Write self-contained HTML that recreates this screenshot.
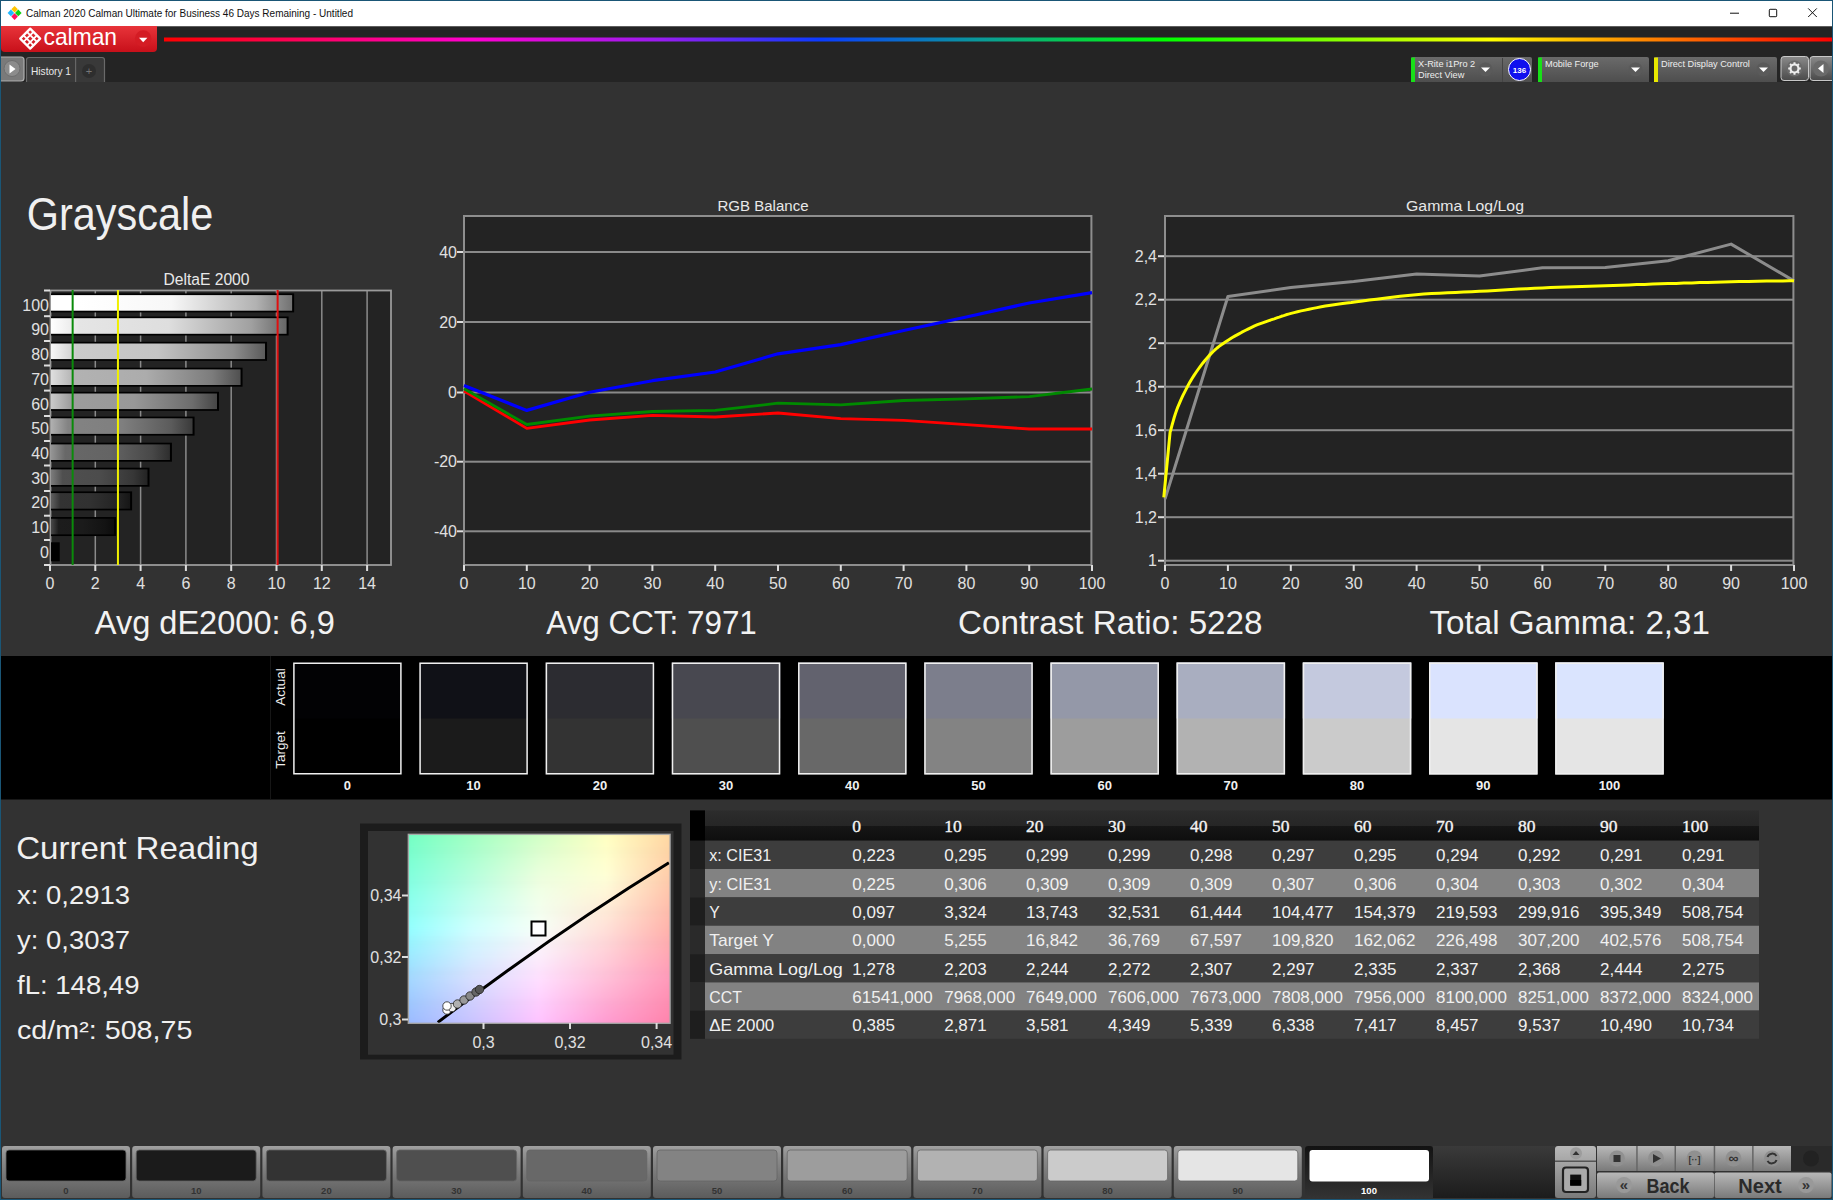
<!DOCTYPE html>
<html><head><meta charset="utf-8"><title>Calman Grayscale</title>
<style>html,body{margin:0;padding:0;background:#333;width:1833px;height:1200px;overflow:hidden}svg{display:block}</style>
</head><body>
<svg width="1833" height="1200" viewBox="0 0 1833 1200">
<defs>
<linearGradient id="rainbow" x1="164" x2="1832" y1="0" y2="0" gradientUnits="userSpaceOnUse">
<stop offset="0" stop-color="#ff0000"/>
<stop offset="0.186" stop-color="#ff00d0"/>
<stop offset="0.297" stop-color="#9a1cf0"/>
<stop offset="0.394" stop-color="#0a3cff"/>
<stop offset="0.489" stop-color="#0a9a9a"/>
<stop offset="0.600" stop-color="#00ff00"/>
<stop offset="0.796" stop-color="#ffff00"/>
<stop offset="0.880" stop-color="#ff9000"/>
<stop offset="1" stop-color="#ff0000"/>
</linearGradient>
<linearGradient id="redbtn" x1="0" x2="0" y1="0" y2="1">
<stop offset="0" stop-color="#e8343a"/><stop offset="1" stop-color="#c8101a"/>
</linearGradient>
<linearGradient id="greybtn" x1="0" x2="0" y1="0" y2="1">
<stop offset="0" stop-color="#8a8a8a"/><stop offset="1" stop-color="#4a4a4a"/>
</linearGradient>
<linearGradient id="selbox" x1="0" x2="0" y1="0" y2="1">
<stop offset="0" stop-color="#6a6a6a"/><stop offset="1" stop-color="#4e4e4e"/>
</linearGradient>
<linearGradient id="tbhead" x1="0" x2="0" y1="0" y2="1">
<stop offset="0" stop-color="#2c2c2c"/><stop offset="0.5" stop-color="#262626"/><stop offset="0.52" stop-color="#161616"/><stop offset="1" stop-color="#0e0e0e"/>
</linearGradient>
<linearGradient id="tbbtn" x1="0" x2="0" y1="0" y2="1">
<stop offset="0" stop-color="#a0a0a0"/><stop offset="0.25" stop-color="#8a8a8a"/><stop offset="1" stop-color="#5c5c5c"/>
</linearGradient>
<linearGradient id="ctrlbtn" x1="0" x2="0" y1="0" y2="1">
<stop offset="0" stop-color="#b8b8b8"/><stop offset="1" stop-color="#7a7a7a"/>
</linearGradient>
</defs>
<rect x="0" y="0" width="1833" height="1200" fill="#323232"/>
<rect x="0" y="0" width="1833" height="26.5" fill="#ffffff"/>
<rect x="0" y="26.5" width="1833" height="55.5" fill="#242424"/>
<g transform="translate(14.6,12.9)"><path d="M0 -7 L3.3 -3.7 L0 -0.4 L-3.3 -3.7 Z" fill="#ffc400"/><path d="M0 0.4 L3.3 3.7 L0 7 L-3.3 3.7 Z" fill="#ff1060"/><path d="M-7 0 L-3.7 -3.3 L-0.4 0 L-3.7 3.3 Z" fill="#20b8ff"/><path d="M0.4 0 L3.7 -3.3 L7 0 L3.7 3.3 Z" fill="#10d010"/></g>
<text x="26" y="17.2" font-family="Liberation Sans" font-size="11.5" text-anchor="start" fill="#111" font-weight="normal" textLength="327" lengthAdjust="spacingAndGlyphs" >Calman 2020 Calman Ultimate for Business 46 Days Remaining - Untitled</text>
<rect x="1730" y="12.7" width="9" height="1" fill="#111"/>
<rect x="1769.3" y="9.3" width="7.4" height="7.4" rx="0.8" fill="none" stroke="#111" stroke-width="1"/>
<path d="M1808.2 8.4 L1816.8 17 M1816.8 8.4 L1808.2 17" stroke="#111" stroke-width="1"/>
<path d="M1 26 H157 V48 Q157 52 153 52 H5 Q1 52 1 48 Z" fill="url(#redbtn)"/>
<g transform="translate(30.2,38.6)"><path d="M0 -10 L10 0 L0 10 L-10 0 Z" fill="none" stroke="#fff" stroke-width="2.2" stroke-linejoin="round"/><path d="M-3.3 -6.7 L6.7 3.3 M3.3 -6.7 L-6.7 3.3 M-6.7 -3.3 L3.3 6.7 M6.7 -3.3 L-3.3 6.7" stroke="#fff" stroke-width="1.8"/></g>
<text x="43.5" y="44.7" font-family="Liberation Sans" font-size="24" text-anchor="start" fill="#ffffff" font-weight="normal" textLength="73.5" lengthAdjust="spacingAndGlyphs" >calman</text>
<circle cx="143.2" cy="38.6" r="8.3" fill="#d41c24"/>
<path d="M139 37.8 L147.4 37.8 L143.2 42.3 Z" fill="#fff"/>
<rect x="164" y="37.5" width="1668" height="4" fill="url(#rainbow)"/>
<path d="M0 57 H21 Q24 57 24 60 V78 Q24 81 21 81 H0 Z" fill="#7a7a7a" stroke="#b0b0b0" stroke-width="1.2"/>
<circle cx="12" cy="68.5" r="8" fill="#8c8c8c" stroke="#6e6e6e" stroke-width="1"/>
<path d="M9.5 64.5 L15.5 69 L9.5 73.5 Z" fill="#fff"/>
<path d="M26.5 82 V60 Q26.5 57.5 29 57.5 H102 Q104.5 57.5 104.5 60 V82" fill="#393939" stroke="#6a6a6a" stroke-width="1.2"/>
<rect x="75" y="58" width="1.2" height="24" fill="#666"/>
<text x="31" y="74.5" font-family="Liberation Sans" font-size="10.5" text-anchor="start" fill="#e8e8e8" font-weight="normal" textLength="40" lengthAdjust="spacingAndGlyphs" >History 1</text>
<circle cx="89" cy="71" r="7" fill="#2e2e2e"/>
<text x="89" y="75" font-family="Liberation Sans" font-size="11" text-anchor="middle" fill="#777" font-weight="normal" >+</text>
<path d="M1411 82 V59 Q1411 57 1413 57 H1530 Q1532 57 1532 59 V82 Z" fill="url(#selbox)"/>
<rect x="1411" y="57.5" width="4" height="24.5" fill="#18e018"/>
<text x="1418" y="66.5" font-family="Liberation Sans" font-size="9.2" text-anchor="start" fill="#eeeeee" font-weight="normal" >X-Rite i1Pro 2</text>
<text x="1418" y="78.0" font-family="Liberation Sans" font-size="9.2" text-anchor="start" fill="#eeeeee" font-weight="normal" >Direct View</text>
<circle cx="1485.5" cy="69.5" r="7" fill="#5a5a5a"/>
<path d="M1481.0 67.5 L1490.0 67.5 L1485.5 72 Z" fill="#fff"/>
<rect x="1502" y="58" width="1" height="24" fill="#444"/>
<circle cx="1519.5" cy="69.5" r="11" fill="#1010ee" stroke="#ffffff" stroke-width="1"/>
<text x="1519.5" y="72.5" font-family="Liberation Sans" font-size="8" text-anchor="middle" fill="#fff" font-weight="bold" >136</text>
<path d="M1538 82 V59 Q1538 57 1540 57 H1647 Q1649 57 1649 59 V82 Z" fill="url(#selbox)"/>
<rect x="1538" y="57.5" width="4" height="24.5" fill="#18e018"/>
<text x="1545" y="66.5" font-family="Liberation Sans" font-size="9.2" text-anchor="start" fill="#eeeeee" font-weight="normal" >Mobile Forge</text>
<circle cx="1635.5" cy="69.5" r="7" fill="#5a5a5a"/>
<path d="M1631.0 67.5 L1640.0 67.5 L1635.5 72 Z" fill="#fff"/>
<path d="M1654 82 V59 Q1654 57 1656 57 H1775 Q1777 57 1777 59 V82 Z" fill="url(#selbox)"/>
<rect x="1654" y="57.5" width="4" height="24.5" fill="#e8e800"/>
<text x="1661" y="66.5" font-family="Liberation Sans" font-size="9.2" text-anchor="start" fill="#eeeeee" font-weight="normal" >Direct Display Control</text>
<circle cx="1763.5" cy="69.5" r="7" fill="#5a5a5a"/>
<path d="M1759.0 67.5 L1768.0 67.5 L1763.5 72 Z" fill="#fff"/>
<rect x="1781" y="56.5" width="27.5" height="24" rx="3" fill="url(#greybtn)" stroke="#c8c8c8" stroke-width="1"/>
<circle cx="1794.5" cy="68.5" r="8" fill="#6a6a6a"/>
<circle cx="1794.5" cy="68.5" r="4" fill="none" stroke="#eee" stroke-width="2.2"/>
<path d="M1799.00 68.50 L1800.80 68.50 M1797.68 71.68 L1798.95 72.95 M1794.50 73.00 L1794.50 74.80 M1791.32 71.68 L1790.05 72.95 M1790.00 68.50 L1788.20 68.50 M1791.32 65.32 L1790.05 64.05 M1794.50 64.00 L1794.50 62.20 M1797.68 65.32 L1798.95 64.05" stroke="#eee" stroke-width="2"/>
<rect x="1810" y="56.5" width="26" height="24" rx="3" fill="url(#greybtn)" stroke="#c8c8c8" stroke-width="1"/>
<circle cx="1821" cy="68.5" r="8" fill="#6a6a6a"/>
<path d="M1823.5 64 L1818 68.5 L1823.5 73 Z" fill="#fff"/>
<text x="26.8" y="230" font-family="Liberation Sans" font-size="46" text-anchor="start" fill="#f0f0f0" font-weight="normal" textLength="186.5" lengthAdjust="spacingAndGlyphs" >Grayscale</text>
<text x="206.5" y="284.9" font-family="Liberation Sans" font-size="16" text-anchor="middle" fill="#e8e8e8" font-weight="normal" textLength="86" lengthAdjust="spacingAndGlyphs" >DeltaE 2000</text>
<rect x="50" y="290" width="341" height="275" fill="#232323"/>
<rect x="94.55" y="290" width="1.5" height="275" fill="#8a8a8a"/>
<rect x="139.85" y="290" width="1.5" height="275" fill="#8a8a8a"/>
<rect x="185.15" y="290" width="1.5" height="275" fill="#8a8a8a"/>
<rect x="230.45" y="290" width="1.5" height="275" fill="#8a8a8a"/>
<rect x="275.75" y="290" width="1.5" height="275" fill="#8a8a8a"/>
<rect x="321.05" y="290" width="1.5" height="275" fill="#8a8a8a"/>
<rect x="366.35" y="290" width="1.5" height="275" fill="#8a8a8a"/>
<rect x="50.5" y="290.5" width="340.5" height="274.5" fill="none" stroke="#9a9a9a" stroke-width="1.8"/>
<rect x="51" y="542.30" width="8.72" height="19" fill="#000"/>
<rect x="51" y="544.00" width="6.72" height="15.6" fill="url(#bar0)"/>
<rect x="51" y="517.05" width="65.03" height="19" fill="#000"/>
<rect x="51" y="518.75" width="63.03" height="15.6" fill="url(#bar1)"/>
<rect x="51" y="491.40" width="81.11" height="19" fill="#000"/>
<rect x="51" y="493.10" width="79.11" height="15.6" fill="url(#bar2)"/>
<rect x="51" y="467.70" width="98.50" height="19" fill="#000"/>
<rect x="51" y="469.40" width="96.50" height="15.6" fill="url(#bar3)"/>
<rect x="51" y="442.70" width="120.93" height="19" fill="#000"/>
<rect x="51" y="444.40" width="118.93" height="15.6" fill="url(#bar4)"/>
<rect x="51" y="416.60" width="143.56" height="19" fill="#000"/>
<rect x="51" y="418.30" width="141.56" height="15.6" fill="url(#bar5)"/>
<rect x="51" y="391.80" width="168.00" height="19" fill="#000"/>
<rect x="51" y="393.50" width="166.00" height="15.6" fill="url(#bar6)"/>
<rect x="51" y="367.70" width="191.55" height="19" fill="#000"/>
<rect x="51" y="369.40" width="189.55" height="15.6" fill="url(#bar7)"/>
<rect x="51" y="341.80" width="216.01" height="19" fill="#000"/>
<rect x="51" y="343.50" width="214.01" height="15.6" fill="url(#bar8)"/>
<rect x="51" y="316.50" width="237.60" height="19" fill="#000"/>
<rect x="51" y="318.20" width="235.60" height="15.6" fill="url(#bar9)"/>
<rect x="51" y="293.40" width="243.13" height="19" fill="#000"/>
<rect x="51" y="295.10" width="241.13" height="15.6" fill="url(#bar10)"/>
<defs><linearGradient id="bar0" x1="0" x2="1" y1="0" y2="0"><stop offset="0" stop-color="rgb(10,10,10)"/><stop offset="0.12" stop-color="rgb(0,0,0)"/><stop offset="0.5" stop-color="rgb(0,0,0)"/><stop offset="0.85" stop-color="rgb(0,0,0)"/><stop offset="1" stop-color="rgb(0,0,0)"/></linearGradient><linearGradient id="bar1" x1="0" x2="1" y1="0" y2="0"><stop offset="0" stop-color="rgb(73,73,73)"/><stop offset="0.12" stop-color="rgb(28,28,28)"/><stop offset="0.5" stop-color="rgb(27,27,27)"/><stop offset="0.85" stop-color="rgb(19,19,19)"/><stop offset="1" stop-color="rgb(12,12,12)"/></linearGradient><linearGradient id="bar2" x1="0" x2="1" y1="0" y2="0"><stop offset="0" stop-color="rgb(96,96,96)"/><stop offset="0.12" stop-color="rgb(51,51,51)"/><stop offset="0.5" stop-color="rgb(49,49,49)"/><stop offset="0.85" stop-color="rgb(35,35,35)"/><stop offset="1" stop-color="rgb(22,22,22)"/></linearGradient><linearGradient id="bar3" x1="0" x2="1" y1="0" y2="0"><stop offset="0" stop-color="rgb(124,124,124)"/><stop offset="0.12" stop-color="rgb(79,79,79)"/><stop offset="0.5" stop-color="rgb(76,76,76)"/><stop offset="0.85" stop-color="rgb(55,55,55)"/><stop offset="1" stop-color="rgb(35,35,35)"/></linearGradient><linearGradient id="bar4" x1="0" x2="1" y1="0" y2="0"><stop offset="0" stop-color="rgb(149,149,149)"/><stop offset="0.12" stop-color="rgb(104,104,104)"/><stop offset="0.5" stop-color="rgb(100,100,100)"/><stop offset="0.85" stop-color="rgb(72,72,72)"/><stop offset="1" stop-color="rgb(46,46,46)"/></linearGradient><linearGradient id="bar5" x1="0" x2="1" y1="0" y2="0"><stop offset="0" stop-color="rgb(176,176,176)"/><stop offset="0.12" stop-color="rgb(131,131,131)"/><stop offset="0.5" stop-color="rgb(127,127,127)"/><stop offset="0.85" stop-color="rgb(91,91,91)"/><stop offset="1" stop-color="rgb(58,58,58)"/></linearGradient><linearGradient id="bar6" x1="0" x2="1" y1="0" y2="0"><stop offset="0" stop-color="rgb(202,202,202)"/><stop offset="0.12" stop-color="rgb(157,157,157)"/><stop offset="0.5" stop-color="rgb(152,152,152)"/><stop offset="0.85" stop-color="rgb(109,109,109)"/><stop offset="1" stop-color="rgb(70,70,70)"/></linearGradient><linearGradient id="bar7" x1="0" x2="1" y1="0" y2="0"><stop offset="0" stop-color="rgb(223,223,223)"/><stop offset="0.12" stop-color="rgb(178,178,178)"/><stop offset="0.5" stop-color="rgb(172,172,172)"/><stop offset="0.85" stop-color="rgb(124,124,124)"/><stop offset="1" stop-color="rgb(80,80,80)"/></linearGradient><linearGradient id="bar8" x1="0" x2="1" y1="0" y2="0"><stop offset="0" stop-color="rgb(248,248,248)"/><stop offset="0.12" stop-color="rgb(203,203,203)"/><stop offset="0.5" stop-color="rgb(196,196,196)"/><stop offset="0.85" stop-color="rgb(142,142,142)"/><stop offset="1" stop-color="rgb(91,91,91)"/></linearGradient><linearGradient id="bar9" x1="0" x2="1" y1="0" y2="0"><stop offset="0" stop-color="rgb(255,255,255)"/><stop offset="0.12" stop-color="rgb(229,229,229)"/><stop offset="0.5" stop-color="rgb(222,222,222)"/><stop offset="0.85" stop-color="rgb(160,160,160)"/><stop offset="1" stop-color="rgb(103,103,103)"/></linearGradient><linearGradient id="bar10" x1="0" x2="1" y1="0" y2="0"><stop offset="0" stop-color="rgb(255,255,255)"/><stop offset="0.12" stop-color="rgb(255,255,255)"/><stop offset="0.5" stop-color="rgb(247,247,247)"/><stop offset="0.85" stop-color="rgb(178,178,178)"/><stop offset="1" stop-color="rgb(114,114,114)"/></linearGradient></defs>
<rect x="71.65" y="290" width="2" height="275" fill="#0a8a0a"/>
<rect x="116.95" y="290" width="2" height="275" fill="#f0f000"/>
<rect x="276.63" y="290" width="2" height="275" fill="#e01010"/>
<rect x="44" y="564.00" width="6" height="2" fill="#dddddd"/>
<rect x="44" y="539.00" width="6" height="2" fill="#dddddd"/>
<rect x="44" y="514.70" width="6" height="2" fill="#dddddd"/>
<rect x="44" y="490.00" width="6" height="2" fill="#dddddd"/>
<rect x="44" y="464.50" width="6" height="2" fill="#dddddd"/>
<rect x="44" y="440.00" width="6" height="2" fill="#dddddd"/>
<rect x="44" y="415.00" width="6" height="2" fill="#dddddd"/>
<rect x="44" y="389.60" width="6" height="2" fill="#dddddd"/>
<rect x="44" y="364.50" width="6" height="2" fill="#dddddd"/>
<rect x="44" y="340.00" width="6" height="2" fill="#dddddd"/>
<rect x="44" y="315.20" width="6" height="2" fill="#dddddd"/>
<rect x="44" y="289.50" width="6" height="2" fill="#dddddd"/>
<text x="49" y="558.3" font-family="Liberation Sans" font-size="16" text-anchor="end" fill="#e0e0e0" font-weight="normal" >0</text>
<text x="49" y="533.4" font-family="Liberation Sans" font-size="16" text-anchor="end" fill="#e0e0e0" font-weight="normal" >10</text>
<text x="49" y="508.4" font-family="Liberation Sans" font-size="16" text-anchor="end" fill="#e0e0e0" font-weight="normal" >20</text>
<text x="49" y="484.3" font-family="Liberation Sans" font-size="16" text-anchor="end" fill="#e0e0e0" font-weight="normal" >30</text>
<text x="49" y="458.8" font-family="Liberation Sans" font-size="16" text-anchor="end" fill="#e0e0e0" font-weight="normal" >40</text>
<text x="49" y="434" font-family="Liberation Sans" font-size="16" text-anchor="end" fill="#e0e0e0" font-weight="normal" >50</text>
<text x="49" y="409.5" font-family="Liberation Sans" font-size="16" text-anchor="end" fill="#e0e0e0" font-weight="normal" >60</text>
<text x="49" y="384.5" font-family="Liberation Sans" font-size="16" text-anchor="end" fill="#e0e0e0" font-weight="normal" >70</text>
<text x="49" y="359.5" font-family="Liberation Sans" font-size="16" text-anchor="end" fill="#e0e0e0" font-weight="normal" >80</text>
<text x="49" y="335" font-family="Liberation Sans" font-size="16" text-anchor="end" fill="#e0e0e0" font-weight="normal" >90</text>
<text x="49" y="310.5" font-family="Liberation Sans" font-size="16" text-anchor="end" fill="#e0e0e0" font-weight="normal" >100</text>
<rect x="49.00" y="565" width="2" height="6" fill="#dddddd"/>
<text x="50.0" y="589" font-family="Liberation Sans" font-size="16" text-anchor="middle" fill="#e0e0e0" font-weight="normal" >0</text>
<rect x="94.30" y="565" width="2" height="6" fill="#dddddd"/>
<text x="95.3" y="589" font-family="Liberation Sans" font-size="16" text-anchor="middle" fill="#e0e0e0" font-weight="normal" >2</text>
<rect x="139.60" y="565" width="2" height="6" fill="#dddddd"/>
<text x="140.6" y="589" font-family="Liberation Sans" font-size="16" text-anchor="middle" fill="#e0e0e0" font-weight="normal" >4</text>
<rect x="184.90" y="565" width="2" height="6" fill="#dddddd"/>
<text x="185.9" y="589" font-family="Liberation Sans" font-size="16" text-anchor="middle" fill="#e0e0e0" font-weight="normal" >6</text>
<rect x="230.20" y="565" width="2" height="6" fill="#dddddd"/>
<text x="231.2" y="589" font-family="Liberation Sans" font-size="16" text-anchor="middle" fill="#e0e0e0" font-weight="normal" >8</text>
<rect x="275.50" y="565" width="2" height="6" fill="#dddddd"/>
<text x="276.5" y="589" font-family="Liberation Sans" font-size="16" text-anchor="middle" fill="#e0e0e0" font-weight="normal" >10</text>
<rect x="320.80" y="565" width="2" height="6" fill="#dddddd"/>
<text x="321.8" y="589" font-family="Liberation Sans" font-size="16" text-anchor="middle" fill="#e0e0e0" font-weight="normal" >12</text>
<rect x="366.10" y="565" width="2" height="6" fill="#dddddd"/>
<text x="367.1" y="589" font-family="Liberation Sans" font-size="16" text-anchor="middle" fill="#e0e0e0" font-weight="normal" >14</text>
<text x="763" y="211" font-family="Liberation Sans" font-size="15.5" text-anchor="middle" fill="#e8e8e8" font-weight="normal" textLength="91" lengthAdjust="spacingAndGlyphs" >RGB Balance</text>
<rect x="464" y="216" width="628" height="349" fill="#232323"/>
<rect x="464" y="251.00" width="628" height="2" fill="#8a8a8a"/>
<rect x="457" y="251.00" width="7" height="2" fill="#dddddd"/>
<text x="457" y="257.5" font-family="Liberation Sans" font-size="16" text-anchor="end" fill="#e0e0e0" font-weight="normal" >40</text>
<rect x="464" y="321.00" width="628" height="2" fill="#8a8a8a"/>
<rect x="457" y="321.00" width="7" height="2" fill="#dddddd"/>
<text x="457" y="327.5" font-family="Liberation Sans" font-size="16" text-anchor="end" fill="#e0e0e0" font-weight="normal" >20</text>
<rect x="464" y="391.50" width="628" height="2" fill="#8a8a8a"/>
<rect x="457" y="391.50" width="7" height="2" fill="#dddddd"/>
<text x="457" y="398.0" font-family="Liberation Sans" font-size="16" text-anchor="end" fill="#e0e0e0" font-weight="normal" >0</text>
<rect x="464" y="460.70" width="628" height="2" fill="#8a8a8a"/>
<rect x="457" y="460.70" width="7" height="2" fill="#dddddd"/>
<text x="457" y="467.2" font-family="Liberation Sans" font-size="16" text-anchor="end" fill="#e0e0e0" font-weight="normal" >-20</text>
<rect x="464" y="530.30" width="628" height="2" fill="#8a8a8a"/>
<rect x="457" y="530.30" width="7" height="2" fill="#dddddd"/>
<text x="457" y="536.8" font-family="Liberation Sans" font-size="16" text-anchor="end" fill="#e0e0e0" font-weight="normal" >-40</text>
<rect x="464" y="216" width="627.4" height="349" fill="none" stroke="#8e8e8e" stroke-width="2"/>
<rect x="463.00" y="565" width="2" height="6" fill="#dddddd"/>
<text x="464.0" y="589" font-family="Liberation Sans" font-size="16" text-anchor="middle" fill="#e0e0e0" font-weight="normal" >0</text>
<rect x="525.80" y="565" width="2" height="6" fill="#dddddd"/>
<text x="526.8" y="589" font-family="Liberation Sans" font-size="16" text-anchor="middle" fill="#e0e0e0" font-weight="normal" >10</text>
<rect x="588.60" y="565" width="2" height="6" fill="#dddddd"/>
<text x="589.6" y="589" font-family="Liberation Sans" font-size="16" text-anchor="middle" fill="#e0e0e0" font-weight="normal" >20</text>
<rect x="651.40" y="565" width="2" height="6" fill="#dddddd"/>
<text x="652.4" y="589" font-family="Liberation Sans" font-size="16" text-anchor="middle" fill="#e0e0e0" font-weight="normal" >30</text>
<rect x="714.20" y="565" width="2" height="6" fill="#dddddd"/>
<text x="715.2" y="589" font-family="Liberation Sans" font-size="16" text-anchor="middle" fill="#e0e0e0" font-weight="normal" >40</text>
<rect x="777.00" y="565" width="2" height="6" fill="#dddddd"/>
<text x="778.0" y="589" font-family="Liberation Sans" font-size="16" text-anchor="middle" fill="#e0e0e0" font-weight="normal" >50</text>
<rect x="839.80" y="565" width="2" height="6" fill="#dddddd"/>
<text x="840.8" y="589" font-family="Liberation Sans" font-size="16" text-anchor="middle" fill="#e0e0e0" font-weight="normal" >60</text>
<rect x="902.60" y="565" width="2" height="6" fill="#dddddd"/>
<text x="903.6" y="589" font-family="Liberation Sans" font-size="16" text-anchor="middle" fill="#e0e0e0" font-weight="normal" >70</text>
<rect x="965.40" y="565" width="2" height="6" fill="#dddddd"/>
<text x="966.4" y="589" font-family="Liberation Sans" font-size="16" text-anchor="middle" fill="#e0e0e0" font-weight="normal" >80</text>
<rect x="1028.20" y="565" width="2" height="6" fill="#dddddd"/>
<text x="1029.2" y="589" font-family="Liberation Sans" font-size="16" text-anchor="middle" fill="#e0e0e0" font-weight="normal" >90</text>
<rect x="1091.00" y="565" width="2" height="6" fill="#dddddd"/>
<text x="1092.0" y="589" font-family="Liberation Sans" font-size="16" text-anchor="middle" fill="#e0e0e0" font-weight="normal" >100</text>
<polyline points="464.0,391 526.8,428.4 589.6,420 652.4,415.4 715.2,417 778.0,413 840.8,418.7 903.6,420.4 966.4,424.7 1029.2,429 1092.0,429" fill="none" stroke="#ff0000" stroke-width="2.8" stroke-linejoin="round"/>
<polyline points="464.0,388.7 526.8,424.5 589.6,416.2 652.4,411.5 715.2,410.4 778.0,403.2 840.8,404.8 903.6,400.5 966.4,398.8 1029.2,396.6 1092.0,389" fill="none" stroke="#008a00" stroke-width="2.8" stroke-linejoin="round"/>
<polyline points="464.0,385.5 526.8,410.4 589.6,392.3 652.4,380.7 715.2,372 778.0,353.8 840.8,344.6 903.6,330.5 966.4,317 1029.2,303 1092.0,292.6" fill="none" stroke="#0000ff" stroke-width="3.2" stroke-linejoin="round"/>
<text x="1465" y="211" font-family="Liberation Sans" font-size="15.5" text-anchor="middle" fill="#e8e8e8" font-weight="normal" textLength="118" lengthAdjust="spacingAndGlyphs" >Gamma Log/Log</text>
<rect x="1165" y="216" width="629" height="349" fill="#232323"/>
<rect x="1165" y="255.20" width="629" height="2" fill="#8a8a8a"/>
<rect x="1158" y="255.20" width="7" height="2" fill="#dddddd"/>
<text x="1157" y="261.7" font-family="Liberation Sans" font-size="16" text-anchor="end" fill="#e0e0e0" font-weight="normal" >2,4</text>
<rect x="1165" y="298.70" width="629" height="2" fill="#8a8a8a"/>
<rect x="1158" y="298.70" width="7" height="2" fill="#dddddd"/>
<text x="1157" y="305.2" font-family="Liberation Sans" font-size="16" text-anchor="end" fill="#e0e0e0" font-weight="normal" >2,2</text>
<rect x="1165" y="342.20" width="629" height="2" fill="#8a8a8a"/>
<rect x="1158" y="342.20" width="7" height="2" fill="#dddddd"/>
<text x="1157" y="348.7" font-family="Liberation Sans" font-size="16" text-anchor="end" fill="#e0e0e0" font-weight="normal" >2</text>
<rect x="1165" y="385.70" width="629" height="2" fill="#8a8a8a"/>
<rect x="1158" y="385.70" width="7" height="2" fill="#dddddd"/>
<text x="1157" y="392.2" font-family="Liberation Sans" font-size="16" text-anchor="end" fill="#e0e0e0" font-weight="normal" >1,8</text>
<rect x="1165" y="429.20" width="629" height="2" fill="#8a8a8a"/>
<rect x="1158" y="429.20" width="7" height="2" fill="#dddddd"/>
<text x="1157" y="435.7" font-family="Liberation Sans" font-size="16" text-anchor="end" fill="#e0e0e0" font-weight="normal" >1,6</text>
<rect x="1165" y="472.70" width="629" height="2" fill="#8a8a8a"/>
<rect x="1158" y="472.70" width="7" height="2" fill="#dddddd"/>
<text x="1157" y="479.2" font-family="Liberation Sans" font-size="16" text-anchor="end" fill="#e0e0e0" font-weight="normal" >1,4</text>
<rect x="1165" y="516.20" width="629" height="2" fill="#8a8a8a"/>
<rect x="1158" y="516.20" width="7" height="2" fill="#dddddd"/>
<text x="1157" y="522.7" font-family="Liberation Sans" font-size="16" text-anchor="end" fill="#e0e0e0" font-weight="normal" >1,2</text>
<rect x="1165" y="559.70" width="629" height="2" fill="#8a8a8a"/>
<rect x="1158" y="559.70" width="7" height="2" fill="#dddddd"/>
<text x="1157" y="566.2" font-family="Liberation Sans" font-size="16" text-anchor="end" fill="#e0e0e0" font-weight="normal" >1</text>
<rect x="1165" y="216" width="628.4" height="349" fill="none" stroke="#8e8e8e" stroke-width="2"/>
<rect x="1164.00" y="565" width="2" height="6" fill="#dddddd"/>
<text x="1165.0" y="589" font-family="Liberation Sans" font-size="16" text-anchor="middle" fill="#e0e0e0" font-weight="normal" >0</text>
<rect x="1226.90" y="565" width="2" height="6" fill="#dddddd"/>
<text x="1227.9" y="589" font-family="Liberation Sans" font-size="16" text-anchor="middle" fill="#e0e0e0" font-weight="normal" >10</text>
<rect x="1289.80" y="565" width="2" height="6" fill="#dddddd"/>
<text x="1290.8" y="589" font-family="Liberation Sans" font-size="16" text-anchor="middle" fill="#e0e0e0" font-weight="normal" >20</text>
<rect x="1352.70" y="565" width="2" height="6" fill="#dddddd"/>
<text x="1353.7" y="589" font-family="Liberation Sans" font-size="16" text-anchor="middle" fill="#e0e0e0" font-weight="normal" >30</text>
<rect x="1415.60" y="565" width="2" height="6" fill="#dddddd"/>
<text x="1416.6" y="589" font-family="Liberation Sans" font-size="16" text-anchor="middle" fill="#e0e0e0" font-weight="normal" >40</text>
<rect x="1478.50" y="565" width="2" height="6" fill="#dddddd"/>
<text x="1479.5" y="589" font-family="Liberation Sans" font-size="16" text-anchor="middle" fill="#e0e0e0" font-weight="normal" >50</text>
<rect x="1541.40" y="565" width="2" height="6" fill="#dddddd"/>
<text x="1542.4" y="589" font-family="Liberation Sans" font-size="16" text-anchor="middle" fill="#e0e0e0" font-weight="normal" >60</text>
<rect x="1604.30" y="565" width="2" height="6" fill="#dddddd"/>
<text x="1605.3" y="589" font-family="Liberation Sans" font-size="16" text-anchor="middle" fill="#e0e0e0" font-weight="normal" >70</text>
<rect x="1667.20" y="565" width="2" height="6" fill="#dddddd"/>
<text x="1668.2" y="589" font-family="Liberation Sans" font-size="16" text-anchor="middle" fill="#e0e0e0" font-weight="normal" >80</text>
<rect x="1730.10" y="565" width="2" height="6" fill="#dddddd"/>
<text x="1731.1" y="589" font-family="Liberation Sans" font-size="16" text-anchor="middle" fill="#e0e0e0" font-weight="normal" >90</text>
<rect x="1793.00" y="565" width="2" height="6" fill="#dddddd"/>
<text x="1794.0" y="589" font-family="Liberation Sans" font-size="16" text-anchor="middle" fill="#e0e0e0" font-weight="normal" >100</text>
<polyline points="1165,499 1227.9,296.5 1290.8,287.6 1353.7,281.5 1416.6,273.9 1479.5,276.1 1542.4,267.8 1605.3,267.4 1668.2,260.7 1731.1,244.1 1794.0,280.9" fill="none" stroke="#8c8c8c" stroke-width="3" stroke-linejoin="round"/>
<polyline points="1163.8,497.3 1170.1,432.1 1170.7,430.2 1171.4,427.6 1172.2,424.5 1173.2,421.1 1174.2,417.5 1175.4,413.8 1176.7,410.1 1178.0,406.6 1179.5,403.2 1181.0,399.6 1182.7,395.9 1184.5,392.3 1186.4,388.6 1188.3,385.0 1190.2,381.6 1192.2,378.3 1194.2,375.1 1196.3,372.0 1198.4,369.0 1200.5,366.1 1202.7,363.2 1204.9,360.5 1207.1,358.0 1209.2,355.6 1211.3,353.4 1213.2,351.5 1215.2,349.7 1217.1,348.0 1219.1,346.4 1221.3,344.8 1223.6,343.2 1226.1,341.5 1228.9,339.7 1231.9,337.8 1235.2,335.9 1238.5,334.1 1241.9,332.2 1245.2,330.5 1248.5,328.8 1251.6,327.3 1254.6,325.9 1257.5,324.7 1260.4,323.6 1263.3,322.6 1266.1,321.6 1268.9,320.6 1271.6,319.7 1274.3,318.8 1276.8,317.9 1279.2,317.1 1281.4,316.3 1283.7,315.6 1286.0,314.8 1288.4,314.1 1291.1,313.4 1294.1,312.6 1297.5,311.8 1301.1,310.9 1305.0,310.1 1309.0,309.2 1313.1,308.4 1317.2,307.6 1321.3,306.8 1325.3,306.1 1329.0,305.5 1332.4,304.9 1335.8,304.4 1339.1,304.0 1342.7,303.5 1346.7,303.0 1351.3,302.5 1356.5,301.8 1362.5,301.0 1369.3,300.1 1376.5,299.2 1384.2,298.2 1392.1,297.2 1400.1,296.3 1408.1,295.4 1415.9,294.7 1423.7,294.1 1431.5,293.6 1439.5,293.2 1447.5,292.8 1455.5,292.4 1463.6,292.1 1471.6,291.7 1479.5,291.3 1487.4,290.9 1495.3,290.4 1503.1,290.0 1511.0,289.5 1518.8,289.1 1526.7,288.7 1534.5,288.3 1542.4,287.9 1550.3,287.6 1558.1,287.3 1566.0,287.0 1573.9,286.7 1581.7,286.5 1589.6,286.2 1597.4,286.0 1605.3,285.7 1613.2,285.4 1621.0,285.2 1628.9,284.9 1636.8,284.6 1644.6,284.4 1652.5,284.1 1660.3,283.8 1668.2,283.6 1676.1,283.4 1683.9,283.1 1691.8,282.9 1699.7,282.6 1707.5,282.4 1715.4,282.2 1723.2,282.0 1731.1,281.8 1739.4,281.6 1748.3,281.4 1757.5,281.3 1766.5,281.1 1775.0,281.0 1782.7,280.9 1789.1,280.8 1794.0,280.7" fill="none" stroke="#ffff00" stroke-width="3" stroke-linejoin="round"/>
<text x="94.8" y="633.8" font-family="Liberation Sans" font-size="33" text-anchor="start" fill="#f2f2f2" font-weight="normal" textLength="240" lengthAdjust="spacingAndGlyphs" >Avg dE2000: 6,9</text>
<text x="546.3" y="633.8" font-family="Liberation Sans" font-size="33" text-anchor="start" fill="#f2f2f2" font-weight="normal" textLength="210.5" lengthAdjust="spacingAndGlyphs" >Avg CCT: 7971</text>
<text x="958" y="633.8" font-family="Liberation Sans" font-size="33" text-anchor="start" fill="#f2f2f2" font-weight="normal" textLength="304.5" lengthAdjust="spacingAndGlyphs" >Contrast Ratio: 5228</text>
<text x="1429.5" y="633.8" font-family="Liberation Sans" font-size="33" text-anchor="start" fill="#f2f2f2" font-weight="normal" textLength="280.5" lengthAdjust="spacingAndGlyphs" >Total Gamma: 2,31</text>
<rect x="1" y="656" width="1831" height="143.5" fill="#000"/>
<rect x="270" y="656" width="1" height="143.5" fill="#161616"/>
<text x="0" y="0" font-family="Liberation Sans" font-size="13.5" text-anchor="middle" fill="#eeeeee" font-weight="normal" transform="translate(285,687) rotate(-90)">Actual</text>
<text x="0" y="0" font-family="Liberation Sans" font-size="13.5" text-anchor="middle" fill="#eeeeee" font-weight="normal" transform="translate(285,750) rotate(-90)">Target</text>
<rect x="293.2" y="662.5" width="108.5" height="112" fill="#000000"/>
<rect x="293.2" y="662.5" width="108.5" height="56" fill="#020204"/>
<rect x="293.9" y="663.25" width="107" height="110.5" fill="none" stroke="#f0f0f0" stroke-width="1.5"/>
<text x="347.4" y="790" font-family="Liberation Sans" font-size="13" text-anchor="middle" fill="#f0f0f0" font-weight="bold" >0</text>
<rect x="419.4" y="662.5" width="108.5" height="112" fill="#1b1b1b"/>
<rect x="419.4" y="662.5" width="108.5" height="56" fill="#101117"/>
<rect x="420.1" y="663.25" width="107" height="110.5" fill="none" stroke="#f0f0f0" stroke-width="1.5"/>
<text x="473.6" y="790" font-family="Liberation Sans" font-size="13" text-anchor="middle" fill="#f0f0f0" font-weight="bold" >10</text>
<rect x="545.6" y="662.5" width="108.5" height="112" fill="#333333"/>
<rect x="545.6" y="662.5" width="108.5" height="56" fill="#2c2c31"/>
<rect x="546.4" y="663.25" width="107" height="110.5" fill="none" stroke="#f0f0f0" stroke-width="1.5"/>
<text x="599.9" y="790" font-family="Liberation Sans" font-size="13" text-anchor="middle" fill="#f0f0f0" font-weight="bold" >20</text>
<rect x="671.8" y="662.5" width="108.5" height="112" fill="#4f4f4f"/>
<rect x="671.8" y="662.5" width="108.5" height="56" fill="#484850"/>
<rect x="672.5" y="663.25" width="107" height="110.5" fill="none" stroke="#f0f0f0" stroke-width="1.5"/>
<text x="726.0" y="790" font-family="Liberation Sans" font-size="13" text-anchor="middle" fill="#f0f0f0" font-weight="bold" >30</text>
<rect x="798.0" y="662.5" width="108.5" height="112" fill="#686868"/>
<rect x="798.0" y="662.5" width="108.5" height="56" fill="#62626e"/>
<rect x="798.8" y="663.25" width="107" height="110.5" fill="none" stroke="#f0f0f0" stroke-width="1.5"/>
<text x="852.2" y="790" font-family="Liberation Sans" font-size="13" text-anchor="middle" fill="#f0f0f0" font-weight="bold" >40</text>
<rect x="924.2" y="662.5" width="108.5" height="112" fill="#838383"/>
<rect x="924.2" y="662.5" width="108.5" height="56" fill="#7c7e8c"/>
<rect x="925.0" y="663.25" width="107" height="110.5" fill="none" stroke="#f0f0f0" stroke-width="1.5"/>
<text x="978.5" y="790" font-family="Liberation Sans" font-size="13" text-anchor="middle" fill="#f0f0f0" font-weight="bold" >50</text>
<rect x="1050.4" y="662.5" width="108.5" height="112" fill="#9d9d9d"/>
<rect x="1050.4" y="662.5" width="108.5" height="56" fill="#9498a8"/>
<rect x="1051.2" y="663.25" width="107" height="110.5" fill="none" stroke="#f0f0f0" stroke-width="1.5"/>
<text x="1104.7" y="790" font-family="Liberation Sans" font-size="13" text-anchor="middle" fill="#f0f0f0" font-weight="bold" >60</text>
<rect x="1176.6" y="662.5" width="108.5" height="112" fill="#b2b2b2"/>
<rect x="1176.6" y="662.5" width="108.5" height="56" fill="#a9aec0"/>
<rect x="1177.3" y="663.25" width="107" height="110.5" fill="none" stroke="#f0f0f0" stroke-width="1.5"/>
<text x="1230.8" y="790" font-family="Liberation Sans" font-size="13" text-anchor="middle" fill="#f0f0f0" font-weight="bold" >70</text>
<rect x="1302.8" y="662.5" width="108.5" height="112" fill="#cbcbcb"/>
<rect x="1302.8" y="662.5" width="108.5" height="56" fill="#c4c9de"/>
<rect x="1303.5" y="663.25" width="107" height="110.5" fill="none" stroke="#f0f0f0" stroke-width="1.5"/>
<text x="1357.0" y="790" font-family="Liberation Sans" font-size="13" text-anchor="middle" fill="#f0f0f0" font-weight="bold" >80</text>
<rect x="1429.0" y="662.5" width="108.5" height="112" fill="#e5e5e5"/>
<rect x="1429.0" y="662.5" width="108.5" height="56" fill="#dae3fe"/>
<rect x="1429.8" y="663.25" width="107" height="110.5" fill="none" stroke="#f0f0f0" stroke-width="1.5"/>
<text x="1483.2" y="790" font-family="Liberation Sans" font-size="13" text-anchor="middle" fill="#f0f0f0" font-weight="bold" >90</text>
<rect x="1555.2" y="662.5" width="108.5" height="112" fill="#e5e5e5"/>
<rect x="1555.2" y="662.5" width="108.5" height="56" fill="#dae4fe"/>
<rect x="1556.0" y="663.25" width="107" height="110.5" fill="none" stroke="#f0f0f0" stroke-width="1.5"/>
<text x="1609.5" y="790" font-family="Liberation Sans" font-size="13" text-anchor="middle" fill="#f0f0f0" font-weight="bold" >100</text>
<text x="16.2" y="858.5" font-family="Liberation Sans" font-size="32" text-anchor="start" fill="#f0f0f0" font-weight="normal" textLength="242.5" lengthAdjust="spacingAndGlyphs" >Current Reading</text>
<text x="17" y="904" font-family="Liberation Sans" font-size="26" text-anchor="start" fill="#f0f0f0" font-weight="normal" textLength="113" lengthAdjust="spacingAndGlyphs" >x: 0,2913</text>
<text x="17" y="949" font-family="Liberation Sans" font-size="26" text-anchor="start" fill="#f0f0f0" font-weight="normal" textLength="113" lengthAdjust="spacingAndGlyphs" >y: 0,3037</text>
<text x="17" y="994" font-family="Liberation Sans" font-size="26" text-anchor="start" fill="#f0f0f0" font-weight="normal" textLength="122.5" lengthAdjust="spacingAndGlyphs" >fL: 148,49</text>
<text x="17" y="1039.3" font-family="Liberation Sans" font-size="26" text-anchor="start" fill="#f0f0f0" font-weight="normal" textLength="175.5" lengthAdjust="spacingAndGlyphs" >cd/m²: 508,75</text>
<rect x="360" y="823.5" width="321.5" height="236" fill="#1c1c1c"/>
<rect x="368" y="831" width="305.5" height="223.7" fill="#323232"/>
<defs>
<linearGradient id="cieH" x1="0" x2="1" y1="0" y2="0"><stop offset="0" stop-color="#80ffe0"/><stop offset="0.5" stop-color="#ffffff"/><stop offset="1" stop-color="#ff88b0"/></linearGradient>
<radialGradient id="cieW" cx="0.45" cy="0.45" r="0.45"><stop offset="0" stop-color="#ffffff" stop-opacity="1"/><stop offset="1" stop-color="#ffffff" stop-opacity="0"/></radialGradient>
<linearGradient id="cieTop" x1="0" x2="0" y1="0" y2="1"><stop offset="0" stop-color="#ffff90" stop-opacity="0.55"/><stop offset="0.5" stop-color="#ffffff" stop-opacity="0"/></linearGradient>
<linearGradient id="cieBot" x1="0" x2="0" y1="0" y2="1"><stop offset="0.5" stop-color="#ff80ff" stop-opacity="0"/><stop offset="1" stop-color="#ff80ff" stop-opacity="0.5"/></linearGradient>
<clipPath id="cieclip"><rect x="408.5" y="834" width="261.5" height="189"/></clipPath>
</defs>
<g clip-path="url(#cieclip)">
<defs><linearGradient id="cr0" x1="0" x2="1" y1="0" y2="0"><stop offset="0.000" stop-color="#70ffc1"/><stop offset="0.125" stop-color="#89ffc1"/><stop offset="0.250" stop-color="#a1ffc1"/><stop offset="0.375" stop-color="#b9ffc3"/><stop offset="0.500" stop-color="#d1ffc5"/><stop offset="0.625" stop-color="#e8ffc3"/><stop offset="0.750" stop-color="#ffffc1"/><stop offset="0.875" stop-color="#ffebb0"/><stop offset="1.000" stop-color="#ffd7a0"/></linearGradient><linearGradient id="cr1" x1="0" x2="1" y1="0" y2="0"><stop offset="0.000" stop-color="#72ffc5"/><stop offset="0.125" stop-color="#8bffc5"/><stop offset="0.250" stop-color="#a3ffc5"/><stop offset="0.375" stop-color="#bcffc6"/><stop offset="0.500" stop-color="#d4ffc8"/><stop offset="0.625" stop-color="#e9ffc6"/><stop offset="0.750" stop-color="#ffffc3"/><stop offset="0.875" stop-color="#ffeab2"/><stop offset="1.000" stop-color="#ffd5a1"/></linearGradient><linearGradient id="cr2" x1="0" x2="1" y1="0" y2="0"><stop offset="0.000" stop-color="#74ffc8"/><stop offset="0.125" stop-color="#8dffc8"/><stop offset="0.250" stop-color="#a6ffc8"/><stop offset="0.375" stop-color="#bfffc9"/><stop offset="0.500" stop-color="#d7ffcb"/><stop offset="0.625" stop-color="#ebffc8"/><stop offset="0.750" stop-color="#ffffc6"/><stop offset="0.875" stop-color="#ffe9b4"/><stop offset="1.000" stop-color="#ffd3a2"/></linearGradient><linearGradient id="cr3" x1="0" x2="1" y1="0" y2="0"><stop offset="0.000" stop-color="#75ffcb"/><stop offset="0.125" stop-color="#8fffcb"/><stop offset="0.250" stop-color="#a8ffcb"/><stop offset="0.375" stop-color="#c1ffcd"/><stop offset="0.500" stop-color="#dbffce"/><stop offset="0.625" stop-color="#edffcb"/><stop offset="0.750" stop-color="#ffffc8"/><stop offset="0.875" stop-color="#ffe8b5"/><stop offset="1.000" stop-color="#ffd2a2"/></linearGradient><linearGradient id="cr4" x1="0" x2="1" y1="0" y2="0"><stop offset="0.000" stop-color="#77ffcf"/><stop offset="0.125" stop-color="#91ffcf"/><stop offset="0.250" stop-color="#abffcf"/><stop offset="0.375" stop-color="#c4ffd0"/><stop offset="0.500" stop-color="#deffd1"/><stop offset="0.625" stop-color="#eeffce"/><stop offset="0.750" stop-color="#ffffcb"/><stop offset="0.875" stop-color="#ffe7b7"/><stop offset="1.000" stop-color="#ffd0a3"/></linearGradient><linearGradient id="cr5" x1="0" x2="1" y1="0" y2="0"><stop offset="0.000" stop-color="#79ffd2"/><stop offset="0.125" stop-color="#93ffd2"/><stop offset="0.250" stop-color="#adffd2"/><stop offset="0.375" stop-color="#c7ffd3"/><stop offset="0.500" stop-color="#e1ffd4"/><stop offset="0.625" stop-color="#f0ffd1"/><stop offset="0.750" stop-color="#ffffcd"/><stop offset="0.875" stop-color="#ffe6b9"/><stop offset="1.000" stop-color="#ffcea4"/></linearGradient><linearGradient id="cr6" x1="0" x2="1" y1="0" y2="0"><stop offset="0.000" stop-color="#7affd5"/><stop offset="0.125" stop-color="#95ffd5"/><stop offset="0.250" stop-color="#b0ffd5"/><stop offset="0.375" stop-color="#caffd6"/><stop offset="0.500" stop-color="#e4ffd7"/><stop offset="0.625" stop-color="#f1ffd3"/><stop offset="0.750" stop-color="#ffffd0"/><stop offset="0.875" stop-color="#ffe6ba"/><stop offset="1.000" stop-color="#ffcda5"/></linearGradient><linearGradient id="cr7" x1="0" x2="1" y1="0" y2="0"><stop offset="0.000" stop-color="#7cffd9"/><stop offset="0.125" stop-color="#97ffd9"/><stop offset="0.250" stop-color="#b2ffd9"/><stop offset="0.375" stop-color="#cdffd9"/><stop offset="0.500" stop-color="#e7ffda"/><stop offset="0.625" stop-color="#f3ffd6"/><stop offset="0.750" stop-color="#ffffd2"/><stop offset="0.875" stop-color="#ffe5bc"/><stop offset="1.000" stop-color="#ffcba6"/></linearGradient><linearGradient id="cr8" x1="0" x2="1" y1="0" y2="0"><stop offset="0.000" stop-color="#7effdc"/><stop offset="0.125" stop-color="#99ffdc"/><stop offset="0.250" stop-color="#b5ffdc"/><stop offset="0.375" stop-color="#d0ffdc"/><stop offset="0.500" stop-color="#eaffdd"/><stop offset="0.625" stop-color="#f4ffd9"/><stop offset="0.750" stop-color="#ffffd5"/><stop offset="0.875" stop-color="#ffe4be"/><stop offset="1.000" stop-color="#ffc9a7"/></linearGradient><linearGradient id="cr9" x1="0" x2="1" y1="0" y2="0"><stop offset="0.000" stop-color="#80ffe0"/><stop offset="0.125" stop-color="#9cffe0"/><stop offset="0.250" stop-color="#b8ffe0"/><stop offset="0.375" stop-color="#d3ffe0"/><stop offset="0.500" stop-color="#eeffe0"/><stop offset="0.625" stop-color="#f6ffdc"/><stop offset="0.750" stop-color="#ffffd8"/><stop offset="0.875" stop-color="#ffe3c0"/><stop offset="1.000" stop-color="#ffc8a8"/></linearGradient><linearGradient id="cr10" x1="0" x2="1" y1="0" y2="0"><stop offset="0.000" stop-color="#81ffe3"/><stop offset="0.125" stop-color="#9effe3"/><stop offset="0.250" stop-color="#baffe3"/><stop offset="0.375" stop-color="#d4ffe2"/><stop offset="0.500" stop-color="#efffe2"/><stop offset="0.625" stop-color="#f7fddd"/><stop offset="0.750" stop-color="#fffbd8"/><stop offset="0.875" stop-color="#ffe0c0"/><stop offset="1.000" stop-color="#ffc5a8"/></linearGradient><linearGradient id="cr11" x1="0" x2="1" y1="0" y2="0"><stop offset="0.000" stop-color="#83ffe6"/><stop offset="0.125" stop-color="#a0ffe6"/><stop offset="0.250" stop-color="#bdffe6"/><stop offset="0.375" stop-color="#d6ffe5"/><stop offset="0.500" stop-color="#f0ffe5"/><stop offset="0.625" stop-color="#f7fbde"/><stop offset="0.750" stop-color="#fff8d8"/><stop offset="0.875" stop-color="#ffddc0"/><stop offset="1.000" stop-color="#ffc2a8"/></linearGradient><linearGradient id="cr12" x1="0" x2="1" y1="0" y2="0"><stop offset="0.000" stop-color="#85ffe9"/><stop offset="0.125" stop-color="#a2ffe9"/><stop offset="0.250" stop-color="#bfffe9"/><stop offset="0.375" stop-color="#d8ffe8"/><stop offset="0.500" stop-color="#f1ffe7"/><stop offset="0.625" stop-color="#f8fadf"/><stop offset="0.750" stop-color="#fff5d8"/><stop offset="0.875" stop-color="#ffdac0"/><stop offset="1.000" stop-color="#ffc0a8"/></linearGradient><linearGradient id="cr13" x1="0" x2="1" y1="0" y2="0"><stop offset="0.000" stop-color="#86ffed"/><stop offset="0.125" stop-color="#a4ffed"/><stop offset="0.250" stop-color="#c2ffed"/><stop offset="0.375" stop-color="#daffeb"/><stop offset="0.500" stop-color="#f2ffea"/><stop offset="0.625" stop-color="#f8f8e1"/><stop offset="0.750" stop-color="#fff1d8"/><stop offset="0.875" stop-color="#ffd7c0"/><stop offset="1.000" stop-color="#ffbda8"/></linearGradient><linearGradient id="cr14" x1="0" x2="1" y1="0" y2="0"><stop offset="0.000" stop-color="#88fff0"/><stop offset="0.125" stop-color="#a6fff0"/><stop offset="0.250" stop-color="#c4fff0"/><stop offset="0.375" stop-color="#dbffee"/><stop offset="0.500" stop-color="#f3ffec"/><stop offset="0.625" stop-color="#f9f6e2"/><stop offset="0.750" stop-color="#ffeed8"/><stop offset="0.875" stop-color="#ffd5c0"/><stop offset="1.000" stop-color="#ffbba8"/></linearGradient><linearGradient id="cr15" x1="0" x2="1" y1="0" y2="0"><stop offset="0.000" stop-color="#8afff3"/><stop offset="0.125" stop-color="#a8fff3"/><stop offset="0.250" stop-color="#c7fff3"/><stop offset="0.375" stop-color="#ddfff1"/><stop offset="0.500" stop-color="#f4ffef"/><stop offset="0.625" stop-color="#f9f5e3"/><stop offset="0.750" stop-color="#ffebd8"/><stop offset="0.875" stop-color="#ffd2c0"/><stop offset="1.000" stop-color="#ffb8a8"/></linearGradient><linearGradient id="cr16" x1="0" x2="1" y1="0" y2="0"><stop offset="0.000" stop-color="#8bfff6"/><stop offset="0.125" stop-color="#aafff6"/><stop offset="0.250" stop-color="#c9fff6"/><stop offset="0.375" stop-color="#dffff4"/><stop offset="0.500" stop-color="#f5fff1"/><stop offset="0.625" stop-color="#faf3e4"/><stop offset="0.750" stop-color="#ffe8d8"/><stop offset="0.875" stop-color="#ffcfc0"/><stop offset="1.000" stop-color="#ffb6a8"/></linearGradient><linearGradient id="cr17" x1="0" x2="1" y1="0" y2="0"><stop offset="0.000" stop-color="#8dfffa"/><stop offset="0.125" stop-color="#acfffa"/><stop offset="0.250" stop-color="#ccfffa"/><stop offset="0.375" stop-color="#e1fff7"/><stop offset="0.500" stop-color="#f6fff4"/><stop offset="0.625" stop-color="#faf1e6"/><stop offset="0.750" stop-color="#ffe4d8"/><stop offset="0.875" stop-color="#ffccc0"/><stop offset="1.000" stop-color="#ffb3a8"/></linearGradient><linearGradient id="cr18" x1="0" x2="1" y1="0" y2="0"><stop offset="0.000" stop-color="#8ffffd"/><stop offset="0.125" stop-color="#aefffd"/><stop offset="0.250" stop-color="#cefffd"/><stop offset="0.375" stop-color="#e3fffa"/><stop offset="0.500" stop-color="#f7fff6"/><stop offset="0.625" stop-color="#fbf0e7"/><stop offset="0.750" stop-color="#ffe1d8"/><stop offset="0.875" stop-color="#ffc9c0"/><stop offset="1.000" stop-color="#ffb1a8"/></linearGradient><linearGradient id="cr19" x1="0" x2="1" y1="0" y2="0"><stop offset="0.000" stop-color="#90fcff"/><stop offset="0.125" stop-color="#b0fdff"/><stop offset="0.250" stop-color="#d0fdff"/><stop offset="0.375" stop-color="#e4fdfb"/><stop offset="0.500" stop-color="#f8fdf8"/><stop offset="0.625" stop-color="#fbede8"/><stop offset="0.750" stop-color="#ffded8"/><stop offset="0.875" stop-color="#ffc6c0"/><stop offset="1.000" stop-color="#ffaea8"/></linearGradient><linearGradient id="cr20" x1="0" x2="1" y1="0" y2="0"><stop offset="0.000" stop-color="#92f8ff"/><stop offset="0.125" stop-color="#b1f9ff"/><stop offset="0.250" stop-color="#d1faff"/><stop offset="0.375" stop-color="#e5fafc"/><stop offset="0.500" stop-color="#f9faf9"/><stop offset="0.625" stop-color="#fceae8"/><stop offset="0.750" stop-color="#ffdad8"/><stop offset="0.875" stop-color="#ffc3c1"/><stop offset="1.000" stop-color="#ffacaa"/></linearGradient><linearGradient id="cr21" x1="0" x2="1" y1="0" y2="0"><stop offset="0.000" stop-color="#94f4ff"/><stop offset="0.125" stop-color="#b3f5ff"/><stop offset="0.250" stop-color="#d2f6ff"/><stop offset="0.375" stop-color="#e5f6fc"/><stop offset="0.500" stop-color="#f9f6f9"/><stop offset="0.625" stop-color="#fce7e8"/><stop offset="0.750" stop-color="#ffd7d8"/><stop offset="0.875" stop-color="#ffc0c2"/><stop offset="1.000" stop-color="#ffa9ac"/></linearGradient><linearGradient id="cr22" x1="0" x2="1" y1="0" y2="0"><stop offset="0.000" stop-color="#95f0ff"/><stop offset="0.125" stop-color="#b4f2ff"/><stop offset="0.250" stop-color="#d2f3ff"/><stop offset="0.375" stop-color="#e6f3fc"/><stop offset="0.500" stop-color="#faf3fa"/><stop offset="0.625" stop-color="#fce3e9"/><stop offset="0.750" stop-color="#ffd4d8"/><stop offset="0.875" stop-color="#ffbdc2"/><stop offset="1.000" stop-color="#ffa7ad"/></linearGradient><linearGradient id="cr23" x1="0" x2="1" y1="0" y2="0"><stop offset="0.000" stop-color="#97ecff"/><stop offset="0.125" stop-color="#b5eeff"/><stop offset="0.250" stop-color="#d3f0ff"/><stop offset="0.375" stop-color="#e7f0fd"/><stop offset="0.500" stop-color="#fbf0fb"/><stop offset="0.625" stop-color="#fde0e9"/><stop offset="0.750" stop-color="#ffd0d8"/><stop offset="0.875" stop-color="#ffbac3"/><stop offset="1.000" stop-color="#ffa4af"/></linearGradient><linearGradient id="cr24" x1="0" x2="1" y1="0" y2="0"><stop offset="0.000" stop-color="#99e8ff"/><stop offset="0.125" stop-color="#b6eaff"/><stop offset="0.250" stop-color="#d4edff"/><stop offset="0.375" stop-color="#e8edfd"/><stop offset="0.500" stop-color="#fcedfc"/><stop offset="0.625" stop-color="#fdddea"/><stop offset="0.750" stop-color="#ffcdd8"/><stop offset="0.875" stop-color="#ffb7c4"/><stop offset="1.000" stop-color="#ffa2b1"/></linearGradient><linearGradient id="cr25" x1="0" x2="1" y1="0" y2="0"><stop offset="0.000" stop-color="#9ae4ff"/><stop offset="0.125" stop-color="#b8e7ff"/><stop offset="0.250" stop-color="#d5e9ff"/><stop offset="0.375" stop-color="#e9e9fd"/><stop offset="0.500" stop-color="#fce9fc"/><stop offset="0.625" stop-color="#fdd9ea"/><stop offset="0.750" stop-color="#ffcad8"/><stop offset="0.875" stop-color="#ffb4c5"/><stop offset="1.000" stop-color="#ff9fb2"/></linearGradient><linearGradient id="cr26" x1="0" x2="1" y1="0" y2="0"><stop offset="0.000" stop-color="#9ce0ff"/><stop offset="0.125" stop-color="#b9e3ff"/><stop offset="0.250" stop-color="#d6e6ff"/><stop offset="0.375" stop-color="#e9e6fe"/><stop offset="0.500" stop-color="#fde6fd"/><stop offset="0.625" stop-color="#fed6ea"/><stop offset="0.750" stop-color="#ffc6d8"/><stop offset="0.875" stop-color="#ffb1c6"/><stop offset="1.000" stop-color="#ff9db4"/></linearGradient><linearGradient id="cr27" x1="0" x2="1" y1="0" y2="0"><stop offset="0.000" stop-color="#9edcff"/><stop offset="0.125" stop-color="#badfff"/><stop offset="0.250" stop-color="#d7e3ff"/><stop offset="0.375" stop-color="#eae3fe"/><stop offset="0.500" stop-color="#fee3fe"/><stop offset="0.625" stop-color="#fed3eb"/><stop offset="0.750" stop-color="#ffc3d8"/><stop offset="0.875" stop-color="#ffaec7"/><stop offset="1.000" stop-color="#ff9ab6"/></linearGradient><linearGradient id="cr28" x1="0" x2="1" y1="0" y2="0"><stop offset="0.000" stop-color="#a0d8ff"/><stop offset="0.125" stop-color="#bcdcff"/><stop offset="0.250" stop-color="#d8e0ff"/><stop offset="0.375" stop-color="#ebe0ff"/><stop offset="0.500" stop-color="#ffe0ff"/><stop offset="0.625" stop-color="#ffd0eb"/><stop offset="0.750" stop-color="#ffc0d8"/><stop offset="0.875" stop-color="#ffacc8"/><stop offset="1.000" stop-color="#ff98b8"/></linearGradient><linearGradient id="cr29" x1="0" x2="1" y1="0" y2="0"><stop offset="0.000" stop-color="#9fd4ff"/><stop offset="0.125" stop-color="#bad8ff"/><stop offset="0.250" stop-color="#d6dcff"/><stop offset="0.375" stop-color="#eadcff"/><stop offset="0.500" stop-color="#ffdcff"/><stop offset="0.625" stop-color="#ffcceb"/><stop offset="0.750" stop-color="#ffbbd7"/><stop offset="0.875" stop-color="#ffa8c6"/><stop offset="1.000" stop-color="#ff95b6"/></linearGradient><linearGradient id="cr30" x1="0" x2="1" y1="0" y2="0"><stop offset="0.000" stop-color="#9ed1ff"/><stop offset="0.125" stop-color="#b9d5ff"/><stop offset="0.250" stop-color="#d4d9ff"/><stop offset="0.375" stop-color="#e9d9ff"/><stop offset="0.500" stop-color="#ffd9ff"/><stop offset="0.625" stop-color="#ffc8ea"/><stop offset="0.750" stop-color="#ffb7d6"/><stop offset="0.875" stop-color="#ffa5c5"/><stop offset="1.000" stop-color="#ff92b4"/></linearGradient><linearGradient id="cr31" x1="0" x2="1" y1="0" y2="0"><stop offset="0.000" stop-color="#9dcdff"/><stop offset="0.125" stop-color="#b8d1ff"/><stop offset="0.250" stop-color="#d2d5ff"/><stop offset="0.375" stop-color="#e8d5ff"/><stop offset="0.500" stop-color="#ffd5ff"/><stop offset="0.625" stop-color="#ffc4ea"/><stop offset="0.750" stop-color="#ffb3d5"/><stop offset="0.875" stop-color="#ffa1c4"/><stop offset="1.000" stop-color="#ff90b2"/></linearGradient><linearGradient id="cr32" x1="0" x2="1" y1="0" y2="0"><stop offset="0.000" stop-color="#9ccaff"/><stop offset="0.125" stop-color="#b6ceff"/><stop offset="0.250" stop-color="#d1d2ff"/><stop offset="0.375" stop-color="#e8d2ff"/><stop offset="0.500" stop-color="#ffd2ff"/><stop offset="0.625" stop-color="#ffc0e9"/><stop offset="0.750" stop-color="#ffafd4"/><stop offset="0.875" stop-color="#ff9ec2"/><stop offset="1.000" stop-color="#ff8db1"/></linearGradient><linearGradient id="cr33" x1="0" x2="1" y1="0" y2="0"><stop offset="0.000" stop-color="#9bc7ff"/><stop offset="0.125" stop-color="#b5cbff"/><stop offset="0.250" stop-color="#cfcfff"/><stop offset="0.375" stop-color="#e7cfff"/><stop offset="0.500" stop-color="#ffcfff"/><stop offset="0.625" stop-color="#ffbde9"/><stop offset="0.750" stop-color="#ffaad3"/><stop offset="0.875" stop-color="#ff9bc1"/><stop offset="1.000" stop-color="#ff8baf"/></linearGradient><linearGradient id="cr34" x1="0" x2="1" y1="0" y2="0"><stop offset="0.000" stop-color="#9ac3ff"/><stop offset="0.125" stop-color="#b4c7ff"/><stop offset="0.250" stop-color="#cdcbff"/><stop offset="0.375" stop-color="#e6cbff"/><stop offset="0.500" stop-color="#ffcbff"/><stop offset="0.625" stop-color="#ffb9e8"/><stop offset="0.750" stop-color="#ffa6d2"/><stop offset="0.875" stop-color="#ff97c0"/><stop offset="1.000" stop-color="#ff88ad"/></linearGradient><linearGradient id="cr35" x1="0" x2="1" y1="0" y2="0"><stop offset="0.000" stop-color="#9ac0ff"/><stop offset="0.125" stop-color="#b3c4ff"/><stop offset="0.250" stop-color="#ccc8ff"/><stop offset="0.375" stop-color="#e5c8ff"/><stop offset="0.500" stop-color="#ffc8ff"/><stop offset="0.625" stop-color="#ffb5e8"/><stop offset="0.750" stop-color="#ffa2d2"/><stop offset="0.875" stop-color="#ff94bf"/><stop offset="1.000" stop-color="#ff86ac"/></linearGradient><linearGradient id="cr36" x1="0" x2="1" y1="0" y2="0"><stop offset="0.000" stop-color="#99bdff"/><stop offset="0.125" stop-color="#b1c1ff"/><stop offset="0.250" stop-color="#cac5ff"/><stop offset="0.375" stop-color="#e4c5ff"/><stop offset="0.500" stop-color="#ffc5ff"/><stop offset="0.625" stop-color="#ffb1e8"/><stop offset="0.750" stop-color="#ff9ed1"/><stop offset="0.875" stop-color="#ff91bd"/><stop offset="1.000" stop-color="#ff83aa"/></linearGradient><linearGradient id="cr37" x1="0" x2="1" y1="0" y2="0"><stop offset="0.000" stop-color="#98b9ff"/><stop offset="0.125" stop-color="#b0bdff"/><stop offset="0.250" stop-color="#c8c1ff"/><stop offset="0.375" stop-color="#e3c1ff"/><stop offset="0.500" stop-color="#ffc1ff"/><stop offset="0.625" stop-color="#ffade7"/><stop offset="0.750" stop-color="#ff9ad0"/><stop offset="0.875" stop-color="#ff8dbc"/><stop offset="1.000" stop-color="#ff81a8"/></linearGradient><filter id="cblur" x="-5%" y="-5%" width="110%" height="110%"><feGaussianBlur stdDeviation="2.5"/></filter></defs>
<g filter="url(#cblur)">
<rect x="404.5" y="830.50" width="269.5" height="5.77" fill="url(#cr0)"/>
<rect x="404.5" y="835.67" width="269.5" height="5.77" fill="url(#cr1)"/>
<rect x="404.5" y="840.84" width="269.5" height="5.77" fill="url(#cr2)"/>
<rect x="404.5" y="846.01" width="269.5" height="5.77" fill="url(#cr3)"/>
<rect x="404.5" y="851.18" width="269.5" height="5.77" fill="url(#cr4)"/>
<rect x="404.5" y="856.36" width="269.5" height="5.77" fill="url(#cr5)"/>
<rect x="404.5" y="861.53" width="269.5" height="5.77" fill="url(#cr6)"/>
<rect x="404.5" y="866.70" width="269.5" height="5.77" fill="url(#cr7)"/>
<rect x="404.5" y="871.87" width="269.5" height="5.77" fill="url(#cr8)"/>
<rect x="404.5" y="877.04" width="269.5" height="5.77" fill="url(#cr9)"/>
<rect x="404.5" y="882.21" width="269.5" height="5.77" fill="url(#cr10)"/>
<rect x="404.5" y="887.38" width="269.5" height="5.77" fill="url(#cr11)"/>
<rect x="404.5" y="892.55" width="269.5" height="5.77" fill="url(#cr12)"/>
<rect x="404.5" y="897.72" width="269.5" height="5.77" fill="url(#cr13)"/>
<rect x="404.5" y="902.89" width="269.5" height="5.77" fill="url(#cr14)"/>
<rect x="404.5" y="908.07" width="269.5" height="5.77" fill="url(#cr15)"/>
<rect x="404.5" y="913.24" width="269.5" height="5.77" fill="url(#cr16)"/>
<rect x="404.5" y="918.41" width="269.5" height="5.77" fill="url(#cr17)"/>
<rect x="404.5" y="923.58" width="269.5" height="5.77" fill="url(#cr18)"/>
<rect x="404.5" y="928.75" width="269.5" height="5.77" fill="url(#cr19)"/>
<rect x="404.5" y="933.92" width="269.5" height="5.77" fill="url(#cr20)"/>
<rect x="404.5" y="939.09" width="269.5" height="5.77" fill="url(#cr21)"/>
<rect x="404.5" y="944.26" width="269.5" height="5.77" fill="url(#cr22)"/>
<rect x="404.5" y="949.43" width="269.5" height="5.77" fill="url(#cr23)"/>
<rect x="404.5" y="954.61" width="269.5" height="5.77" fill="url(#cr24)"/>
<rect x="404.5" y="959.78" width="269.5" height="5.77" fill="url(#cr25)"/>
<rect x="404.5" y="964.95" width="269.5" height="5.77" fill="url(#cr26)"/>
<rect x="404.5" y="970.12" width="269.5" height="5.77" fill="url(#cr27)"/>
<rect x="404.5" y="975.29" width="269.5" height="5.77" fill="url(#cr28)"/>
<rect x="404.5" y="980.46" width="269.5" height="5.77" fill="url(#cr29)"/>
<rect x="404.5" y="985.63" width="269.5" height="5.77" fill="url(#cr30)"/>
<rect x="404.5" y="990.80" width="269.5" height="5.77" fill="url(#cr31)"/>
<rect x="404.5" y="995.97" width="269.5" height="5.77" fill="url(#cr32)"/>
<rect x="404.5" y="1001.14" width="269.5" height="5.77" fill="url(#cr33)"/>
<rect x="404.5" y="1006.32" width="269.5" height="5.77" fill="url(#cr34)"/>
<rect x="404.5" y="1011.49" width="269.5" height="5.77" fill="url(#cr35)"/>
<rect x="404.5" y="1016.66" width="269.5" height="5.77" fill="url(#cr36)"/>
<rect x="404.5" y="1021.83" width="269.5" height="5.77" fill="url(#cr37)"/>
</g>
<path d="M437.8 1022.4 Q553.4 934 668.9 862.8" fill="none" stroke="#000" stroke-width="3"/>
</g>
<rect x="408.3" y="834.3" width="261.8" height="189" fill="none" stroke="#a8a8a8" stroke-width="1.3"/>
<circle cx="447" cy="1010" r="4.2" fill="#ffffff" stroke="#222" stroke-width="0.8"/>
<circle cx="452" cy="1007.5" r="4.2" fill="#f0f0f0" stroke="#222" stroke-width="0.8"/>
<circle cx="457.5" cy="1004" r="4.2" fill="#b0b0b0" stroke="#222" stroke-width="0.8"/>
<circle cx="464" cy="1000" r="4.2" fill="#999999" stroke="#222" stroke-width="0.8"/>
<circle cx="470" cy="996" r="4.2" fill="#888888" stroke="#222" stroke-width="0.8"/>
<circle cx="476" cy="992" r="4.2" fill="#666666" stroke="#222" stroke-width="0.8"/>
<circle cx="479.5" cy="989.5" r="4.2" fill="#555555" stroke="#222" stroke-width="0.8"/>
<circle cx="447" cy="1006" r="4.2" fill="#ffffff" stroke="#222" stroke-width="0.8"/>
<rect x="531.5" y="921.5" width="14" height="14" fill="#fff" stroke="#000" stroke-width="2"/>
<rect x="402" y="894.5" width="6" height="2" fill="#ddd"/>
<text x="401.5" y="901.0" font-family="Liberation Sans" font-size="16" text-anchor="end" fill="#e0e0e0" font-weight="normal" >0,34</text>
<rect x="402" y="956" width="6" height="2" fill="#ddd"/>
<text x="401.5" y="962.5" font-family="Liberation Sans" font-size="16" text-anchor="end" fill="#e0e0e0" font-weight="normal" >0,32</text>
<rect x="402" y="1018.5" width="6" height="2" fill="#ddd"/>
<text x="401.5" y="1025.0" font-family="Liberation Sans" font-size="16" text-anchor="end" fill="#e0e0e0" font-weight="normal" >0,3</text>
<rect x="482.5" y="1023" width="2" height="6" fill="#ddd"/>
<text x="483.5" y="1047.7" font-family="Liberation Sans" font-size="16" text-anchor="middle" fill="#e0e0e0" font-weight="normal" >0,3</text>
<rect x="569" y="1023" width="2" height="6" fill="#ddd"/>
<text x="570" y="1047.7" font-family="Liberation Sans" font-size="16" text-anchor="middle" fill="#e0e0e0" font-weight="normal" >0,32</text>
<rect x="655.6" y="1023" width="2" height="6" fill="#ddd"/>
<text x="656.6" y="1047.7" font-family="Liberation Sans" font-size="16" text-anchor="middle" fill="#e0e0e0" font-weight="normal" >0,34</text>
<rect x="690" y="810.4" width="1069" height="30.3" fill="url(#tbhead)"/>
<rect x="690" y="810.4" width="15" height="30.3" fill="#000"/>
<text x="852.3" y="831.8" font-family="Liberation Serif" font-size="17.5" text-anchor="start" fill="#f4f4f4" font-weight="normal" stroke="#f4f4f4" stroke-width="0.35">0</text>
<text x="944.2" y="831.8" font-family="Liberation Serif" font-size="17.5" text-anchor="start" fill="#f4f4f4" font-weight="normal" stroke="#f4f4f4" stroke-width="0.35">10</text>
<text x="1026" y="831.8" font-family="Liberation Serif" font-size="17.5" text-anchor="start" fill="#f4f4f4" font-weight="normal" stroke="#f4f4f4" stroke-width="0.35">20</text>
<text x="1108" y="831.8" font-family="Liberation Serif" font-size="17.5" text-anchor="start" fill="#f4f4f4" font-weight="normal" stroke="#f4f4f4" stroke-width="0.35">30</text>
<text x="1190" y="831.8" font-family="Liberation Serif" font-size="17.5" text-anchor="start" fill="#f4f4f4" font-weight="normal" stroke="#f4f4f4" stroke-width="0.35">40</text>
<text x="1272" y="831.8" font-family="Liberation Serif" font-size="17.5" text-anchor="start" fill="#f4f4f4" font-weight="normal" stroke="#f4f4f4" stroke-width="0.35">50</text>
<text x="1354" y="831.8" font-family="Liberation Serif" font-size="17.5" text-anchor="start" fill="#f4f4f4" font-weight="normal" stroke="#f4f4f4" stroke-width="0.35">60</text>
<text x="1436" y="831.8" font-family="Liberation Serif" font-size="17.5" text-anchor="start" fill="#f4f4f4" font-weight="normal" stroke="#f4f4f4" stroke-width="0.35">70</text>
<text x="1518" y="831.8" font-family="Liberation Serif" font-size="17.5" text-anchor="start" fill="#f4f4f4" font-weight="normal" stroke="#f4f4f4" stroke-width="0.35">80</text>
<text x="1600" y="831.8" font-family="Liberation Serif" font-size="17.5" text-anchor="start" fill="#f4f4f4" font-weight="normal" stroke="#f4f4f4" stroke-width="0.35">90</text>
<text x="1682" y="831.8" font-family="Liberation Serif" font-size="17.5" text-anchor="start" fill="#f4f4f4" font-weight="normal" stroke="#f4f4f4" stroke-width="0.35">100</text>
<rect x="705" y="840.7" width="1054" height="28.3" fill="#3d3d3d"/>
<rect x="690" y="840.7" width="15" height="28.3" fill="#1e1e1e"/>
<text x="709.3" y="861.2" font-family="Liberation Sans" font-size="17" text-anchor="start" fill="#f0f0f0" font-weight="normal" textLength="61.8" lengthAdjust="spacingAndGlyphs" >x: CIE31</text>
<text x="852.3" y="861.2" font-family="Liberation Sans" font-size="17" text-anchor="start" fill="#f0f0f0" font-weight="normal" >0,223</text>
<text x="944.2" y="861.2" font-family="Liberation Sans" font-size="17" text-anchor="start" fill="#f0f0f0" font-weight="normal" >0,295</text>
<text x="1026" y="861.2" font-family="Liberation Sans" font-size="17" text-anchor="start" fill="#f0f0f0" font-weight="normal" >0,299</text>
<text x="1108" y="861.2" font-family="Liberation Sans" font-size="17" text-anchor="start" fill="#f0f0f0" font-weight="normal" >0,299</text>
<text x="1190" y="861.2" font-family="Liberation Sans" font-size="17" text-anchor="start" fill="#f0f0f0" font-weight="normal" >0,298</text>
<text x="1272" y="861.2" font-family="Liberation Sans" font-size="17" text-anchor="start" fill="#f0f0f0" font-weight="normal" >0,297</text>
<text x="1354" y="861.2" font-family="Liberation Sans" font-size="17" text-anchor="start" fill="#f0f0f0" font-weight="normal" >0,295</text>
<text x="1436" y="861.2" font-family="Liberation Sans" font-size="17" text-anchor="start" fill="#f0f0f0" font-weight="normal" >0,294</text>
<text x="1518" y="861.2" font-family="Liberation Sans" font-size="17" text-anchor="start" fill="#f0f0f0" font-weight="normal" >0,292</text>
<text x="1600" y="861.2" font-family="Liberation Sans" font-size="17" text-anchor="start" fill="#f0f0f0" font-weight="normal" >0,291</text>
<text x="1682" y="861.2" font-family="Liberation Sans" font-size="17" text-anchor="start" fill="#f0f0f0" font-weight="normal" >0,291</text>
<rect x="705" y="869.0" width="1054" height="28.4" fill="#828282"/>
<rect x="690" y="869.0" width="15" height="28.4" fill="#2a2a2a"/>
<text x="709.3" y="889.5" font-family="Liberation Sans" font-size="17" text-anchor="start" fill="#f0f0f0" font-weight="normal" textLength="62.2" lengthAdjust="spacingAndGlyphs" >y: CIE31</text>
<text x="852.3" y="889.5" font-family="Liberation Sans" font-size="17" text-anchor="start" fill="#f0f0f0" font-weight="normal" >0,225</text>
<text x="944.2" y="889.5" font-family="Liberation Sans" font-size="17" text-anchor="start" fill="#f0f0f0" font-weight="normal" >0,306</text>
<text x="1026" y="889.5" font-family="Liberation Sans" font-size="17" text-anchor="start" fill="#f0f0f0" font-weight="normal" >0,309</text>
<text x="1108" y="889.5" font-family="Liberation Sans" font-size="17" text-anchor="start" fill="#f0f0f0" font-weight="normal" >0,309</text>
<text x="1190" y="889.5" font-family="Liberation Sans" font-size="17" text-anchor="start" fill="#f0f0f0" font-weight="normal" >0,309</text>
<text x="1272" y="889.5" font-family="Liberation Sans" font-size="17" text-anchor="start" fill="#f0f0f0" font-weight="normal" >0,307</text>
<text x="1354" y="889.5" font-family="Liberation Sans" font-size="17" text-anchor="start" fill="#f0f0f0" font-weight="normal" >0,306</text>
<text x="1436" y="889.5" font-family="Liberation Sans" font-size="17" text-anchor="start" fill="#f0f0f0" font-weight="normal" >0,304</text>
<text x="1518" y="889.5" font-family="Liberation Sans" font-size="17" text-anchor="start" fill="#f0f0f0" font-weight="normal" >0,303</text>
<text x="1600" y="889.5" font-family="Liberation Sans" font-size="17" text-anchor="start" fill="#f0f0f0" font-weight="normal" >0,302</text>
<text x="1682" y="889.5" font-family="Liberation Sans" font-size="17" text-anchor="start" fill="#f0f0f0" font-weight="normal" >0,304</text>
<rect x="705" y="897.4" width="1054" height="28.3" fill="#3d3d3d"/>
<rect x="690" y="897.4" width="15" height="28.3" fill="#1e1e1e"/>
<text x="709.3" y="917.9" font-family="Liberation Sans" font-size="17" text-anchor="start" fill="#f0f0f0" font-weight="normal" textLength="10.5" lengthAdjust="spacingAndGlyphs" >Y</text>
<text x="852.3" y="917.9" font-family="Liberation Sans" font-size="17" text-anchor="start" fill="#f0f0f0" font-weight="normal" >0,097</text>
<text x="944.2" y="917.9" font-family="Liberation Sans" font-size="17" text-anchor="start" fill="#f0f0f0" font-weight="normal" >3,324</text>
<text x="1026" y="917.9" font-family="Liberation Sans" font-size="17" text-anchor="start" fill="#f0f0f0" font-weight="normal" >13,743</text>
<text x="1108" y="917.9" font-family="Liberation Sans" font-size="17" text-anchor="start" fill="#f0f0f0" font-weight="normal" >32,531</text>
<text x="1190" y="917.9" font-family="Liberation Sans" font-size="17" text-anchor="start" fill="#f0f0f0" font-weight="normal" >61,444</text>
<text x="1272" y="917.9" font-family="Liberation Sans" font-size="17" text-anchor="start" fill="#f0f0f0" font-weight="normal" >104,477</text>
<text x="1354" y="917.9" font-family="Liberation Sans" font-size="17" text-anchor="start" fill="#f0f0f0" font-weight="normal" >154,379</text>
<text x="1436" y="917.9" font-family="Liberation Sans" font-size="17" text-anchor="start" fill="#f0f0f0" font-weight="normal" >219,593</text>
<text x="1518" y="917.9" font-family="Liberation Sans" font-size="17" text-anchor="start" fill="#f0f0f0" font-weight="normal" >299,916</text>
<text x="1600" y="917.9" font-family="Liberation Sans" font-size="17" text-anchor="start" fill="#f0f0f0" font-weight="normal" >395,349</text>
<text x="1682" y="917.9" font-family="Liberation Sans" font-size="17" text-anchor="start" fill="#f0f0f0" font-weight="normal" >508,754</text>
<rect x="705" y="925.7" width="1054" height="28.5" fill="#828282"/>
<rect x="690" y="925.7" width="15" height="28.5" fill="#2a2a2a"/>
<text x="709.3" y="946.2" font-family="Liberation Sans" font-size="17" text-anchor="start" fill="#f0f0f0" font-weight="normal" textLength="64.5" lengthAdjust="spacingAndGlyphs" >Target Y</text>
<text x="852.3" y="946.2" font-family="Liberation Sans" font-size="17" text-anchor="start" fill="#f0f0f0" font-weight="normal" >0,000</text>
<text x="944.2" y="946.2" font-family="Liberation Sans" font-size="17" text-anchor="start" fill="#f0f0f0" font-weight="normal" >5,255</text>
<text x="1026" y="946.2" font-family="Liberation Sans" font-size="17" text-anchor="start" fill="#f0f0f0" font-weight="normal" >16,842</text>
<text x="1108" y="946.2" font-family="Liberation Sans" font-size="17" text-anchor="start" fill="#f0f0f0" font-weight="normal" >36,769</text>
<text x="1190" y="946.2" font-family="Liberation Sans" font-size="17" text-anchor="start" fill="#f0f0f0" font-weight="normal" >67,597</text>
<text x="1272" y="946.2" font-family="Liberation Sans" font-size="17" text-anchor="start" fill="#f0f0f0" font-weight="normal" >109,820</text>
<text x="1354" y="946.2" font-family="Liberation Sans" font-size="17" text-anchor="start" fill="#f0f0f0" font-weight="normal" >162,062</text>
<text x="1436" y="946.2" font-family="Liberation Sans" font-size="17" text-anchor="start" fill="#f0f0f0" font-weight="normal" >226,498</text>
<text x="1518" y="946.2" font-family="Liberation Sans" font-size="17" text-anchor="start" fill="#f0f0f0" font-weight="normal" >307,200</text>
<text x="1600" y="946.2" font-family="Liberation Sans" font-size="17" text-anchor="start" fill="#f0f0f0" font-weight="normal" >402,576</text>
<text x="1682" y="946.2" font-family="Liberation Sans" font-size="17" text-anchor="start" fill="#f0f0f0" font-weight="normal" >508,754</text>
<rect x="705" y="954.2" width="1054" height="28.2" fill="#3d3d3d"/>
<rect x="690" y="954.2" width="15" height="28.2" fill="#1e1e1e"/>
<text x="709.3" y="974.7" font-family="Liberation Sans" font-size="17" text-anchor="start" fill="#f0f0f0" font-weight="normal" textLength="133.5" lengthAdjust="spacingAndGlyphs" >Gamma Log/Log</text>
<text x="852.3" y="974.7" font-family="Liberation Sans" font-size="17" text-anchor="start" fill="#f0f0f0" font-weight="normal" >1,278</text>
<text x="944.2" y="974.7" font-family="Liberation Sans" font-size="17" text-anchor="start" fill="#f0f0f0" font-weight="normal" >2,203</text>
<text x="1026" y="974.7" font-family="Liberation Sans" font-size="17" text-anchor="start" fill="#f0f0f0" font-weight="normal" >2,244</text>
<text x="1108" y="974.7" font-family="Liberation Sans" font-size="17" text-anchor="start" fill="#f0f0f0" font-weight="normal" >2,272</text>
<text x="1190" y="974.7" font-family="Liberation Sans" font-size="17" text-anchor="start" fill="#f0f0f0" font-weight="normal" >2,307</text>
<text x="1272" y="974.7" font-family="Liberation Sans" font-size="17" text-anchor="start" fill="#f0f0f0" font-weight="normal" >2,297</text>
<text x="1354" y="974.7" font-family="Liberation Sans" font-size="17" text-anchor="start" fill="#f0f0f0" font-weight="normal" >2,335</text>
<text x="1436" y="974.7" font-family="Liberation Sans" font-size="17" text-anchor="start" fill="#f0f0f0" font-weight="normal" >2,337</text>
<text x="1518" y="974.7" font-family="Liberation Sans" font-size="17" text-anchor="start" fill="#f0f0f0" font-weight="normal" >2,368</text>
<text x="1600" y="974.7" font-family="Liberation Sans" font-size="17" text-anchor="start" fill="#f0f0f0" font-weight="normal" >2,444</text>
<text x="1682" y="974.7" font-family="Liberation Sans" font-size="17" text-anchor="start" fill="#f0f0f0" font-weight="normal" >2,275</text>
<rect x="705" y="982.4" width="1054" height="28.2" fill="#828282"/>
<rect x="690" y="982.4" width="15" height="28.2" fill="#2a2a2a"/>
<text x="709.3" y="1002.9" font-family="Liberation Sans" font-size="17" text-anchor="start" fill="#f0f0f0" font-weight="normal" textLength="32.5" lengthAdjust="spacingAndGlyphs" >CCT</text>
<text x="852.3" y="1002.9" font-family="Liberation Sans" font-size="17" text-anchor="start" fill="#f0f0f0" font-weight="normal" >61541,000</text>
<text x="944.2" y="1002.9" font-family="Liberation Sans" font-size="17" text-anchor="start" fill="#f0f0f0" font-weight="normal" >7968,000</text>
<text x="1026" y="1002.9" font-family="Liberation Sans" font-size="17" text-anchor="start" fill="#f0f0f0" font-weight="normal" >7649,000</text>
<text x="1108" y="1002.9" font-family="Liberation Sans" font-size="17" text-anchor="start" fill="#f0f0f0" font-weight="normal" >7606,000</text>
<text x="1190" y="1002.9" font-family="Liberation Sans" font-size="17" text-anchor="start" fill="#f0f0f0" font-weight="normal" >7673,000</text>
<text x="1272" y="1002.9" font-family="Liberation Sans" font-size="17" text-anchor="start" fill="#f0f0f0" font-weight="normal" >7808,000</text>
<text x="1354" y="1002.9" font-family="Liberation Sans" font-size="17" text-anchor="start" fill="#f0f0f0" font-weight="normal" >7956,000</text>
<text x="1436" y="1002.9" font-family="Liberation Sans" font-size="17" text-anchor="start" fill="#f0f0f0" font-weight="normal" >8100,000</text>
<text x="1518" y="1002.9" font-family="Liberation Sans" font-size="17" text-anchor="start" fill="#f0f0f0" font-weight="normal" >8251,000</text>
<text x="1600" y="1002.9" font-family="Liberation Sans" font-size="17" text-anchor="start" fill="#f0f0f0" font-weight="normal" >8372,000</text>
<text x="1682" y="1002.9" font-family="Liberation Sans" font-size="17" text-anchor="start" fill="#f0f0f0" font-weight="normal" >8324,000</text>
<rect x="705" y="1010.6" width="1054" height="28.2" fill="#3d3d3d"/>
<rect x="690" y="1010.6" width="15" height="28.2" fill="#1e1e1e"/>
<text x="709.3" y="1031.1" font-family="Liberation Sans" font-size="17" text-anchor="start" fill="#f0f0f0" font-weight="normal" textLength="65" lengthAdjust="spacingAndGlyphs" >ΔE 2000</text>
<text x="852.3" y="1031.1" font-family="Liberation Sans" font-size="17" text-anchor="start" fill="#f0f0f0" font-weight="normal" >0,385</text>
<text x="944.2" y="1031.1" font-family="Liberation Sans" font-size="17" text-anchor="start" fill="#f0f0f0" font-weight="normal" >2,871</text>
<text x="1026" y="1031.1" font-family="Liberation Sans" font-size="17" text-anchor="start" fill="#f0f0f0" font-weight="normal" >3,581</text>
<text x="1108" y="1031.1" font-family="Liberation Sans" font-size="17" text-anchor="start" fill="#f0f0f0" font-weight="normal" >4,349</text>
<text x="1190" y="1031.1" font-family="Liberation Sans" font-size="17" text-anchor="start" fill="#f0f0f0" font-weight="normal" >5,339</text>
<text x="1272" y="1031.1" font-family="Liberation Sans" font-size="17" text-anchor="start" fill="#f0f0f0" font-weight="normal" >6,338</text>
<text x="1354" y="1031.1" font-family="Liberation Sans" font-size="17" text-anchor="start" fill="#f0f0f0" font-weight="normal" >7,417</text>
<text x="1436" y="1031.1" font-family="Liberation Sans" font-size="17" text-anchor="start" fill="#f0f0f0" font-weight="normal" >8,457</text>
<text x="1518" y="1031.1" font-family="Liberation Sans" font-size="17" text-anchor="start" fill="#f0f0f0" font-weight="normal" >9,537</text>
<text x="1600" y="1031.1" font-family="Liberation Sans" font-size="17" text-anchor="start" fill="#f0f0f0" font-weight="normal" >10,490</text>
<text x="1682" y="1031.1" font-family="Liberation Sans" font-size="17" text-anchor="start" fill="#f0f0f0" font-weight="normal" >10,734</text>
<rect x="2.0" y="1146" width="128" height="52" rx="3" fill="url(#tbbtn)"/>
<rect x="6.0" y="1150" width="120" height="31" rx="3" fill="#000000" stroke="#666" stroke-width="0.8"/>
<text x="66.0" y="1194" font-family="Liberation Sans" font-size="9.5" text-anchor="middle" fill="#333333" font-weight="bold" >0</text>
<rect x="132.2" y="1146" width="128" height="52" rx="3" fill="url(#tbbtn)"/>
<rect x="136.2" y="1150" width="120" height="31" rx="3" fill="#1b1b1b" stroke="#666" stroke-width="0.8"/>
<text x="196.2" y="1194" font-family="Liberation Sans" font-size="9.5" text-anchor="middle" fill="#333333" font-weight="bold" >10</text>
<rect x="262.4" y="1146" width="128" height="52" rx="3" fill="url(#tbbtn)"/>
<rect x="266.4" y="1150" width="120" height="31" rx="3" fill="#333333" stroke="#666" stroke-width="0.8"/>
<text x="326.4" y="1194" font-family="Liberation Sans" font-size="9.5" text-anchor="middle" fill="#333333" font-weight="bold" >20</text>
<rect x="392.6" y="1146" width="128" height="52" rx="3" fill="url(#tbbtn)"/>
<rect x="396.6" y="1150" width="120" height="31" rx="3" fill="#4f4f4f" stroke="#666" stroke-width="0.8"/>
<text x="456.6" y="1194" font-family="Liberation Sans" font-size="9.5" text-anchor="middle" fill="#333333" font-weight="bold" >30</text>
<rect x="522.8" y="1146" width="128" height="52" rx="3" fill="url(#tbbtn)"/>
<rect x="526.8" y="1150" width="120" height="31" rx="3" fill="#686868" stroke="#666" stroke-width="0.8"/>
<text x="586.8" y="1194" font-family="Liberation Sans" font-size="9.5" text-anchor="middle" fill="#333333" font-weight="bold" >40</text>
<rect x="653.0" y="1146" width="128" height="52" rx="3" fill="url(#tbbtn)"/>
<rect x="657.0" y="1150" width="120" height="31" rx="3" fill="#838383" stroke="#666" stroke-width="0.8"/>
<text x="717.0" y="1194" font-family="Liberation Sans" font-size="9.5" text-anchor="middle" fill="#333333" font-weight="bold" >50</text>
<rect x="783.2" y="1146" width="128" height="52" rx="3" fill="url(#tbbtn)"/>
<rect x="787.2" y="1150" width="120" height="31" rx="3" fill="#9d9d9d" stroke="#666" stroke-width="0.8"/>
<text x="847.2" y="1194" font-family="Liberation Sans" font-size="9.5" text-anchor="middle" fill="#333333" font-weight="bold" >60</text>
<rect x="913.4" y="1146" width="128" height="52" rx="3" fill="url(#tbbtn)"/>
<rect x="917.4" y="1150" width="120" height="31" rx="3" fill="#b2b2b2" stroke="#666" stroke-width="0.8"/>
<text x="977.4" y="1194" font-family="Liberation Sans" font-size="9.5" text-anchor="middle" fill="#333333" font-weight="bold" >70</text>
<rect x="1043.6" y="1146" width="128" height="52" rx="3" fill="url(#tbbtn)"/>
<rect x="1047.6" y="1150" width="120" height="31" rx="3" fill="#cbcbcb" stroke="#666" stroke-width="0.8"/>
<text x="1107.6" y="1194" font-family="Liberation Sans" font-size="9.5" text-anchor="middle" fill="#333333" font-weight="bold" >80</text>
<rect x="1173.8" y="1146" width="128" height="52" rx="3" fill="url(#tbbtn)"/>
<rect x="1177.8" y="1150" width="120" height="31" rx="3" fill="#e5e5e5" stroke="#666" stroke-width="0.8"/>
<text x="1237.8" y="1194" font-family="Liberation Sans" font-size="9.5" text-anchor="middle" fill="#333333" font-weight="bold" >90</text>
<defs><linearGradient id="selbtn" x1="0" x2="0" y1="0" y2="1"><stop offset="0" stop-color="#121212"/><stop offset="1" stop-color="#333333"/></linearGradient><linearGradient id="tbgap" x1="0" x2="0" y1="0" y2="1"><stop offset="0" stop-color="#3a3a3a"/><stop offset="1" stop-color="#1c1c1c"/></linearGradient></defs>
<rect x="1433" y="1146" width="122" height="52" fill="url(#tbgap)"/>
<rect x="1305" y="1146" width="128" height="52" rx="3" fill="url(#selbtn)"/>
<rect x="1309.5" y="1150" width="119.5" height="31.5" rx="3" fill="#ffffff"/>
<text x="1369" y="1194" font-family="Liberation Sans" font-size="9.5" text-anchor="middle" fill="#ffffff" font-weight="bold" >100</text>
<rect x="1555" y="1146" width="41" height="52" rx="3" fill="url(#ctrlbtn)"/>
<rect x="1555" y="1160.5" width="41" height="1.5" fill="#555"/>
<circle cx="1576" cy="1153.2" r="6" fill="#9c9c9c"/>
<path d="M1572.5 1155 L1576 1151 L1579.5 1155 Z" fill="#333"/>
<rect x="1563" y="1167.5" width="25" height="24.5" rx="3" fill="#aaa" stroke="#222" stroke-width="2.2"/>
<rect x="1570.2" y="1174.6" width="11" height="11" fill="#111"/>
<rect x="1570.2" y="1180" width="11" height="5.6" fill="#000"/>
<rect x="1597" y="1146" width="194" height="25" fill="url(#ctrlbtn)"/>
<rect x="1636.2" y="1146" width="1.5" height="25" fill="#666"/>
<rect x="1674.5" y="1146" width="1.5" height="25" fill="#666"/>
<rect x="1713.7" y="1146" width="1.5" height="25" fill="#666"/>
<rect x="1752.1" y="1146" width="1.5" height="25" fill="#666"/>
<circle cx="1617" cy="1158.5" r="8" fill="#909090"/>
<circle cx="1656" cy="1158.5" r="8" fill="#909090"/>
<circle cx="1694.5" cy="1158.5" r="8" fill="#909090"/>
<circle cx="1733.5" cy="1158.5" r="8" fill="#909090"/>
<circle cx="1772" cy="1158.5" r="8" fill="#909090"/>
<rect x="1613.5" y="1155" width="7" height="7" fill="#333"/>
<path d="M1653 1154 L1661 1158.5 L1653 1163 Z" fill="#333"/>
<text x="1694.5" y="1162.5" font-family="Liberation Sans" font-size="9" text-anchor="middle" fill="#333" font-weight="bold" >[··]</text>
<text x="1733.5" y="1163" font-family="Liberation Sans" font-size="14" text-anchor="middle" fill="#333" font-weight="bold" >∞</text>
<path d="M1767.5 1157 A5 5 0 0 1 1776.5 1156 M1776.5 1160 A5 5 0 0 1 1767.5 1161" fill="none" stroke="#333" stroke-width="2"/>
<rect x="1791" y="1146" width="41" height="25" fill="#2a2a2a"/>
<circle cx="1811" cy="1158.5" r="8" fill="#222"/>
<rect x="1597" y="1172.5" width="117" height="25.5" rx="2" fill="url(#ctrlbtn)"/>
<rect x="1714.5" y="1172.5" width="117" height="25.5" rx="2" fill="url(#ctrlbtn)"/>
<circle cx="1624" cy="1185" r="8" fill="#999"/>
<text x="1624" y="1190" font-family="Liberation Sans" font-size="15" text-anchor="middle" fill="#333" font-weight="bold" >«</text>
<text x="1668" y="1193" font-family="Liberation Sans" font-size="20" text-anchor="middle" fill="#2a2a2a" font-weight="bold" textLength="43" lengthAdjust="spacingAndGlyphs" >Back</text>
<text x="1760" y="1193" font-family="Liberation Sans" font-size="20" text-anchor="middle" fill="#2a2a2a" font-weight="bold" >Next</text>
<circle cx="1806" cy="1185" r="8" fill="#999"/>
<text x="1806" y="1190" font-family="Liberation Sans" font-size="15" text-anchor="middle" fill="#333" font-weight="bold" >»</text>
<rect x="0" y="0" width="1833" height="1" fill="#1a5676"/>
<rect x="0" y="0" width="1" height="1200" fill="#1a5676"/>
<rect x="1832" y="0" width="1" height="1200" fill="#1a5676"/>
<rect x="0" y="1199" width="1833" height="1" fill="#1a5676"/>
</svg>
</body></html>
